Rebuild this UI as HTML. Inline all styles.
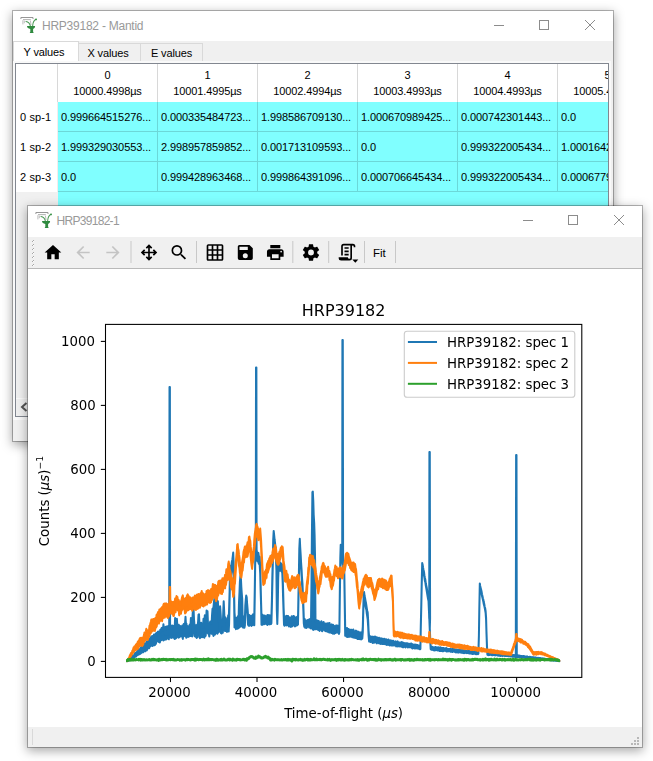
<!DOCTYPE html>
<html><head><meta charset="utf-8"><title>HRP39182 - Mantid</title>
<style>
html,body{margin:0;padding:0;}
body{width:653px;height:761px;background:#fff;position:relative;overflow:hidden;font-family:"Liberation Sans",sans-serif;font-size:12px;color:#000;}
.abs{position:absolute;}
.win{position:absolute;background:#fff;border:1px solid rgba(0,0,0,.27);background-clip:padding-box;box-sizing:border-box;}
#w1{left:12px;top:10px;width:602px;height:432px;box-shadow:0 3px 10px rgba(0,0,0,.34);}
#w2{left:27px;top:205px;width:616px;height:543px;box-shadow:0 3px 10px rgba(0,0,0,.34);}
.ttl{position:absolute;left:29px;top:0;height:30px;line-height:30px;color:#999;font-size:12px;white-space:nowrap;}
.tab{position:absolute;box-sizing:border-box;border:1px solid #d9d9d9;background:#f0f0f0;text-align:center;font-size:11px;letter-spacing:-0.14px;white-space:nowrap;}
.cell{position:absolute;height:30px;line-height:30px;font-size:11px;letter-spacing:-0.1px;white-space:nowrap;overflow:hidden;}
.hd{position:absolute;text-align:center;font-size:11px;letter-spacing:-0.12px;line-height:16px;white-space:nowrap;overflow:hidden;}
.rh{position:absolute;font-size:11px;letter-spacing:0.12px;line-height:30px;white-space:nowrap;}
svg text{font-family:"DejaVu Sans",sans-serif;}
</style></head><body>

<div class="win" id="w1">
<div class="ttl" style="letter-spacing:-0.24px">HRP39182 - Mantid</div>
<div class="abs" style="left:0;top:30px;width:600px;height:400px;background:#f0f0f0;"></div>
<div class="tab" style="left:65px;top:32px;width:63px;height:20px;line-height:18px;text-indent:-3px;">X values</div>
<div class="tab" style="left:127px;top:32px;width:63px;height:20px;line-height:18px;text-indent:0px">E values</div>
<div class="tab" style="left:0;top:30px;width:66px;height:23px;line-height:20px;background:#fff;border-bottom:none;text-indent:-4px;">Y values</div>
<div class="abs" style="left:2px;top:52px;width:594px;height:354px;background:#fff;border:1px solid #828790;box-sizing:border-box;overflow:hidden;box-shadow:0 0 0 2px #f9f9f9;">
<div class="abs" style="left:42px;top:38px;width:560px;height:120px;background:#80ffff;"></div>
<div class="abs" style="left:141px;top:0;width:1px;height:38px;background:#d8d8d8;"></div>
<div class="abs" style="left:141px;top:38px;width:1px;height:90px;background:#6cd8d8;"></div>
<div class="abs" style="left:241px;top:0;width:1px;height:38px;background:#d8d8d8;"></div>
<div class="abs" style="left:241px;top:38px;width:1px;height:90px;background:#6cd8d8;"></div>
<div class="abs" style="left:341px;top:0;width:1px;height:38px;background:#d8d8d8;"></div>
<div class="abs" style="left:341px;top:38px;width:1px;height:90px;background:#6cd8d8;"></div>
<div class="abs" style="left:441px;top:0;width:1px;height:38px;background:#d8d8d8;"></div>
<div class="abs" style="left:441px;top:38px;width:1px;height:90px;background:#6cd8d8;"></div>
<div class="abs" style="left:541px;top:0;width:1px;height:38px;background:#d8d8d8;"></div>
<div class="abs" style="left:541px;top:38px;width:1px;height:90px;background:#6cd8d8;"></div>
<div class="abs" style="left:641px;top:0;width:1px;height:38px;background:#d8d8d8;"></div>
<div class="abs" style="left:641px;top:38px;width:1px;height:90px;background:#6cd8d8;"></div>
<div class="abs" style="left:41px;top:0;width:1px;height:38px;background:#d8d8d8;"></div>
<div class="abs" style="left:41px;top:38px;width:1px;height:90px;background:#f4ecec;"></div>
<div class="abs" style="left:0;top:128px;width:42px;height:210px;background:#f0f0f0;"></div>
<div class="abs" style="left:42px;top:67px;width:560px;height:1px;background:#6cd8d8;"></div>
<div class="rh" style="left:4px;top:38px;">0 sp-1</div>
<div class="cell" style="left:45px;top:38px;width:96px;">0.999664515276...</div>
<div class="cell" style="left:145px;top:38px;width:96px;">0.000335484723...</div>
<div class="cell" style="left:245px;top:38px;width:96px;">1.998586709130...</div>
<div class="cell" style="left:345px;top:38px;width:96px;">1.000670989425...</div>
<div class="cell" style="left:445px;top:38px;width:96px;">0.000742301443...</div>
<div class="cell" style="left:545px;top:38px;width:96px;">0.0</div>
<div class="abs" style="left:42px;top:97px;width:560px;height:1px;background:#6cd8d8;"></div>
<div class="rh" style="left:4px;top:68px;">1 sp-2</div>
<div class="cell" style="left:45px;top:68px;width:96px;">1.999329030553...</div>
<div class="cell" style="left:145px;top:68px;width:96px;">2.998957859852...</div>
<div class="cell" style="left:245px;top:68px;width:96px;">0.001713109593...</div>
<div class="cell" style="left:345px;top:68px;width:96px;">0.0</div>
<div class="cell" style="left:445px;top:68px;width:96px;">0.999322005434...</div>
<div class="cell" style="left:545px;top:68px;width:96px;">1.000164298</div>
<div class="abs" style="left:42px;top:127px;width:560px;height:1px;background:#6cd8d8;"></div>
<div class="rh" style="left:4px;top:98px;">2 sp-3</div>
<div class="cell" style="left:45px;top:98px;width:96px;">0.0</div>
<div class="cell" style="left:145px;top:98px;width:96px;">0.999428963468...</div>
<div class="cell" style="left:245px;top:98px;width:96px;">0.999864391096...</div>
<div class="cell" style="left:345px;top:98px;width:96px;">0.000706645434...</div>
<div class="cell" style="left:445px;top:98px;width:96px;">0.999322005434...</div>
<div class="cell" style="left:545px;top:98px;width:96px;">0.000677994</div>
<div class="hd" style="left:42px;top:3px;width:99px;">0<br>10000.4998µs</div>
<div class="hd" style="left:142px;top:3px;width:99px;">1<br>10001.4995µs</div>
<div class="hd" style="left:242px;top:3px;width:99px;">2<br>10002.4994µs</div>
<div class="hd" style="left:342px;top:3px;width:99px;">3<br>10003.4993µs</div>
<div class="hd" style="left:442px;top:3px;width:99px;">4<br>10004.4993µs</div>
<div class="hd" style="left:542px;top:3px;width:99px;">5<br>10005.4992µs</div>
<div class="abs" style="left:0;top:334px;width:593px;height:18px;background:#f0f0f0;border-top:1px solid #fafafa;box-sizing:border-box;"></div>
<svg class="abs" style="left:2.5px;top:337px" width="10" height="12" viewBox="0 0 10 12"><path d="M7.5 2L3 6L7.5 10" stroke="#555" stroke-width="2" fill="none"/></svg>
</div>
<div class="abs" style="left:0;top:408px;width:600px;height:1px;background:#fafafa;"></div>
</div>
<div class="win" id="w2">
<div class="ttl" style="letter-spacing:-0.7px;left:28.5px">HRP39182-1</div>
<div class="abs" style="left:0;top:31px;width:614px;height:32px;background:#f0f0f0;border-bottom:1px solid #b9b9b9;box-sizing:border-box;"></div>
<div class="abs" style="left:0;top:521px;width:614px;height:20px;background:#f0f0f0;"></div>
<div class="abs" style="left:4px;top:523px;width:1px;height:16px;background:#d9d9d9;"></div>
<div class="abs" style="left:345px;top:39px;font-size:11.5px;line-height:16px;">Fit</div>
</div>
<svg class="abs" style="left:0;top:0;will-change:transform" width="653" height="761" viewBox="0 0 653 761">
<g transform="translate(0 0)">
<path d="M20.9 19V17.5H33V19" stroke="#8a8a8a" stroke-width="0.9" fill="none"/>
<path d="M23 19.6H30.8" stroke="#aaa" stroke-width="0.9" fill="none"/>
<path d="M22.9 20.2V24.4M24.3 20.6V23.2M30.4 20.6L31 25" stroke="#b5b5b5" stroke-width="0.9" fill="none"/>
<path d="M26 21.5C28 21.7 29.7 23 30.4 26.2M36.2 19.3C34 20.2 32.8 22.6 32.6 26.2" stroke="#4a9a55" stroke-width="1.05" fill="none" stroke-linecap="round"/>
<circle cx="36" cy="19.4" r="0.9" fill="#3a9447"/>
<path d="M27 26.1H35.1C35.1 27.8 34 28.8 33.1 29V31.8L33.7 32.9H29.7L30.3 31.8V29C28.5 28.8 27 27.8 27 26.1Z" fill="#2f8a3f"/>
</g>
<g transform="translate(15 195)">
<path d="M20.9 19V17.5H33V19" stroke="#8a8a8a" stroke-width="0.9" fill="none"/>
<path d="M23 19.6H30.8" stroke="#aaa" stroke-width="0.9" fill="none"/>
<path d="M22.9 20.2V24.4M24.3 20.6V23.2M30.4 20.6L31 25" stroke="#b5b5b5" stroke-width="0.9" fill="none"/>
<path d="M26 21.5C28 21.7 29.7 23 30.4 26.2M36.2 19.3C34 20.2 32.8 22.6 32.6 26.2" stroke="#4a9a55" stroke-width="1.05" fill="none" stroke-linecap="round"/>
<circle cx="36" cy="19.4" r="0.9" fill="#3a9447"/>
<path d="M27 26.1H35.1C35.1 27.8 34 28.8 33.1 29V31.8L33.7 32.9H29.7L30.3 31.8V29C28.5 28.8 27 27.8 27 26.1Z" fill="#2f8a3f"/>
</g>
<path d="M494 25.5H504" stroke="#8c8c8c" stroke-width="1" fill="none"/><rect x="539.5" y="20.5" width="9" height="9" stroke="#8c8c8c" stroke-width="1" fill="none"/><path d="M585 20L595 30M595 20L585 30" stroke="#8c8c8c" stroke-width="1" fill="none"/>
<path d="M523 220.5H533" stroke="#8c8c8c" stroke-width="1" fill="none"/><rect x="568.5" y="215.5" width="9" height="9" stroke="#8c8c8c" stroke-width="1" fill="none"/><path d="M614 215L624 225M624 215L614 225" stroke="#8c8c8c" stroke-width="1" fill="none"/>
<rect x="33" y="240" width="1" height="1" fill="#a8a8a8"/><rect x="32" y="241" width="1" height="1" fill="#a8a8a8"/><rect x="33" y="241" width="1" height="1" fill="#fff"/>
<rect x="33" y="244" width="1" height="1" fill="#a8a8a8"/><rect x="32" y="245" width="1" height="1" fill="#a8a8a8"/><rect x="33" y="245" width="1" height="1" fill="#fff"/>
<rect x="33" y="248" width="1" height="1" fill="#a8a8a8"/><rect x="32" y="249" width="1" height="1" fill="#a8a8a8"/><rect x="33" y="249" width="1" height="1" fill="#fff"/>
<rect x="33" y="252" width="1" height="1" fill="#a8a8a8"/><rect x="32" y="253" width="1" height="1" fill="#a8a8a8"/><rect x="33" y="253" width="1" height="1" fill="#fff"/>
<rect x="33" y="256" width="1" height="1" fill="#a8a8a8"/><rect x="32" y="257" width="1" height="1" fill="#a8a8a8"/><rect x="33" y="257" width="1" height="1" fill="#fff"/>
<rect x="33" y="260" width="1" height="1" fill="#a8a8a8"/><rect x="32" y="261" width="1" height="1" fill="#a8a8a8"/><rect x="33" y="261" width="1" height="1" fill="#fff"/>
<rect x="33" y="264" width="1" height="1" fill="#a8a8a8"/><rect x="32" y="265" width="1" height="1" fill="#a8a8a8"/><rect x="33" y="265" width="1" height="1" fill="#fff"/>
<g transform="translate(43.00 242.50) scale(0.8333)" fill="#000"><path d="M10,20V14H14V20H19V12H22L12,3L2,12H5V20H10Z"/></g>
<g transform="translate(73.00 242.50) scale(0.8333)" fill="#c4c4c4"><path d="M20,11V13H8L13.5,18.5L12.08,19.92L4.16,12L12.08,4.08L13.5,5.5L8,11H20Z"/></g>
<g transform="translate(103.00 242.50) scale(0.8333)" fill="#c4c4c4"><path d="M4,11V13H16L10.5,18.5L11.92,19.92L19.84,12L11.92,4.08L10.5,5.5L16,11H4Z"/></g>
<g transform="translate(139.00 242.50) scale(0.8333)" fill="#000"><path d="M13,11H18L16.5,9.5L17.92,8.08L21.84,12L17.92,15.92L16.5,14.5L18,13H13V18L14.5,16.5L15.92,17.92L12,21.84L8.08,17.92L9.5,16.5L11,18V13H6L7.5,14.5L6.08,15.92L2.16,12L6.08,8.08L7.5,9.5L6,11H11V6L9.5,7.5L8.08,6.08L12,2.16L15.92,6.08L14.5,7.5L13,6V11Z"/></g>
<g transform="translate(169.00 242.50) scale(0.8333)" fill="#000"><path d="M9.5,3A6.5,6.5 0 0,1 16,9.5C16,11.11 15.41,12.59 14.44,13.73L14.71,14H15.5L20.5,19L19,20.5L14,15.5V14.71L13.73,14.44C12.59,15.41 11.11,16 9.5,16A6.5,6.5 0 0,1 3,9.5A6.5,6.5 0 0,1 9.5,3M9.5,5C7,5 5,7 5,9.5C5,12 7,14 9.5,14C12,14 14,12 14,9.5C14,7 12,5 9.5,5Z"/></g>
<g transform="translate(205.00 242.50) scale(0.8333)" fill="#000"><path d="M10,4V8H14V4H10M16,4V8H20V4H16M16,10V14H20V10H16M16,16V20H20V16H16M14,20V16H10V20H14M8,20V16H4V20H8M8,14V10H4V14H8M8,8V4H4V8H8M10,14H14V10H10V14M4,2H20A2,2 0 0,1 22,4V20A2,2 0 0,1 20,22H4C2.92,22 2,21.1 2,20V4A2,2 0 0,1 4,2Z"/></g>
<g transform="translate(235.30 242.50) scale(0.8333)" fill="#000"><path d="M15,9H5V5H15M12,19A3,3 0 0,1 9,16A3,3 0 0,1 12,13A3,3 0 0,1 15,16A3,3 0 0,1 12,19M17,3H5C3.89,3 3,3.9 3,5V19A2,2 0 0,0 5,21H19A2,2 0 0,0 21,19V7L17,3Z"/></g>
<g transform="translate(265.30 242.50) scale(0.8333)" fill="#000"><path d="M18,3H6V7H18M19,12A1,1 0 0,1 18,11A1,1 0 0,1 19,10A1,1 0 0,1 20,11A1,1 0 0,1 19,12M16,19H8V14H16M19,8H5A3,3 0 0,0 2,11V17H6V21H18V17H22V11A3,3 0 0,0 19,8Z"/></g>
<g transform="translate(301.00 242.50) scale(0.8333)" fill="#000"><path d="M12,15.5A3.5,3.5 0 0,1 8.5,12A3.5,3.5 0 0,1 12,8.5A3.5,3.5 0 0,1 15.5,12A3.5,3.5 0 0,1 12,15.5M19.43,12.97C19.47,12.65 19.5,12.33 19.5,12C19.5,11.67 19.47,11.34 19.43,11L21.54,9.37C21.73,9.22 21.78,8.95 21.66,8.73L19.66,5.27C19.54,5.05 19.27,4.96 19.05,5.05L16.56,6.05C16.04,5.66 15.5,5.32 14.87,5.07L14.5,2.42C14.46,2.18 14.25,2 14,2H10C9.75,2 9.54,2.18 9.5,2.42L9.13,5.07C8.5,5.32 7.96,5.66 7.44,6.05L4.95,5.05C4.73,4.96 4.46,5.05 4.34,5.27L2.34,8.73C2.21,8.95 2.27,9.22 2.46,9.37L4.57,11C4.53,11.34 4.5,11.67 4.5,12C4.5,12.33 4.53,12.65 4.57,12.97L2.46,14.63C2.27,14.78 2.21,15.05 2.34,15.27L4.34,18.73C4.46,18.95 4.73,19.03 4.95,18.95L7.44,17.94C7.96,18.34 8.5,18.68 9.13,18.93L9.5,21.58C9.54,21.82 9.75,22 10,22H14C14.25,22 14.46,21.82 14.5,21.58L14.87,18.93C15.5,18.67 16.04,18.34 16.56,17.94L19.05,18.95C19.27,19.03 19.54,18.95 19.66,18.73L21.66,15.27C21.78,15.05 21.73,14.78 21.54,14.63L19.43,12.97Z"/></g>
<g transform="translate(337.00 242.20) scale(0.8333)" fill="#000"><path d="M15,20A1,1 0 0,0 16,19V4H8A1,1 0 0,0 7,5V16H5V5A3,3 0 0,1 8,2H19A3,3 0 0,1 22,5V6H20V5A1,1 0 0,0 19,4A1,1 0 0,0 18,5V9L18,19A3,3 0 0,1 15,22H5A3,3 0 0,1 2,19V18H13A2,2 0 0,0 15,20M9,6H14V8H9V6M9,10H14V12H9V10M9,14H14V16H9V14Z"/></g>
<path d="M352.3 259.6h6l-3 3.1z" fill="#000"/>
<rect x="130.5" y="241" width="1" height="22" fill="#c8c8c8"/>
<rect x="196" y="241" width="1" height="22" fill="#c8c8c8"/>
<rect x="292.3" y="241" width="1" height="22" fill="#c8c8c8"/>
<rect x="328.2" y="241" width="1" height="22" fill="#c8c8c8"/>
<rect x="364" y="241" width="1" height="22" fill="#c8c8c8"/>
<rect x="395" y="241" width="1" height="22" fill="#c8c8c8"/>
<rect x="637" y="737" width="2" height="2" fill="#b8b8b8"/>
<rect x="634" y="740" width="2" height="2" fill="#b8b8b8"/>
<rect x="637" y="740" width="2" height="2" fill="#b8b8b8"/>
<rect x="631" y="743" width="2" height="2" fill="#b8b8b8"/>
<rect x="634" y="743" width="2" height="2" fill="#b8b8b8"/>
<rect x="637" y="743" width="2" height="2" fill="#b8b8b8"/>
<clipPath id="cp"><rect x="105.5" y="324.4" width="476.29999999999995" height="353.0"/></clipPath>
<g clip-path="url(#cp)" fill="none" stroke-width="2" stroke-linejoin="round" stroke-linecap="butt">
<polygon stroke="#1f77b4" fill="#1f77b4" points="127.0,660.8 127.5,660.4 127.9,660.3 128.3,659.8 128.8,659.7 129.2,659.1 129.7,658.5 130.1,658.4 130.6,657.6 131.0,657.7 131.5,657.0 131.9,656.7 132.4,656.1 132.8,655.5 133.3,655.9 133.7,655.4 134.2,655.0 134.6,654.4 135.1,653.0 135.5,652.9 136.0,653.0 136.4,652.5 136.9,652.0 137.3,651.3 137.8,650.4 138.2,650.4 138.7,649.9 139.1,649.4 139.6,648.9 140.0,649.1 140.5,648.3 140.9,647.3 141.4,647.5 141.8,647.2 142.3,646.8 142.7,647.1 143.2,645.6 143.6,644.9 144.1,644.7 144.5,644.8 145.0,643.3 145.4,644.6 145.9,643.5 146.3,642.6 146.8,641.4 147.2,642.1 147.7,641.7 148.1,641.4 148.6,639.9 149.0,640.3 149.5,640.5 149.9,638.3 150.4,640.4 150.8,638.0 151.3,636.4 151.7,637.4 152.2,637.3 152.6,636.1 153.1,635.7 153.5,636.8 154.0,634.4 154.4,635.6 154.9,635.4 155.3,635.5 155.8,633.5 156.2,633.0 156.7,635.2 157.1,633.5 157.6,632.0 158.0,631.5 158.5,632.6 158.9,631.6 159.4,632.5 159.8,633.3 160.3,629.7 160.7,631.6 161.2,630.4 161.6,628.1 162.1,630.7 162.5,627.6 163.0,630.9 163.4,624.2 163.9,628.5 164.3,628.8 164.8,629.2 165.2,627.1 165.7,626.9 166.1,629.4 166.6,626.5 167.0,626.5 167.5,628.1 167.9,627.5 168.4,625.8 168.8,626.9 169.3,629.0 169.2,625.4 169.5,387.0 169.9,387.0 170.1,625.4 170.2,626.0 170.6,626.8 171.1,627.0 171.5,628.3 172.0,625.5 172.4,627.0 172.9,625.7 173.3,626.2 173.8,628.2 174.2,628.6 174.7,627.8 175.1,618.0 175.6,624.3 176.0,623.7 176.5,626.1 176.9,618.7 177.4,627.6 177.8,624.8 178.3,625.6 178.7,624.7 179.2,625.8 179.6,626.8 180.1,626.4 180.5,626.1 181.0,626.8 181.4,628.8 181.9,629.3 182.3,625.5 182.8,626.2 183.2,627.8 183.7,624.1 184.1,628.2 184.6,623.5 185.0,624.2 185.5,616.7 185.9,623.3 186.4,623.6 186.8,628.1 187.3,627.5 187.7,626.2 188.2,628.0 188.6,628.0 189.1,627.9 189.5,625.1 190.0,624.4 190.4,626.9 190.9,617.9 191.3,627.0 191.8,627.0 192.2,624.2 192.7,613.3 193.1,608.0 193.6,610.0 194.0,619.0 194.5,625.5 194.9,625.3 195.4,626.6 195.8,626.6 196.3,625.1 196.7,625.7 197.2,627.2 197.6,625.7 198.1,621.5 198.5,614.7 199.0,614.2 199.4,622.6 199.9,624.9 200.3,625.2 200.8,625.9 201.2,622.7 201.7,626.0 202.1,627.1 202.6,624.7 203.0,627.8 203.5,618.7 203.9,623.7 204.4,624.7 204.8,615.2 205.3,627.5 205.7,626.9 206.2,617.5 206.6,610.4 207.1,612.8 207.5,611.3 208.0,624.3 208.4,625.6 208.9,627.2 209.3,624.3 209.8,623.5 210.2,621.6 210.7,623.4 211.1,623.7 211.6,623.8 212.0,615.5 212.5,608.7 212.9,608.4 213.4,607.9 213.8,603.6 214.3,599.2 214.7,595.7 215.2,598.1 215.6,597.3 216.1,598.8 216.5,597.1 217.0,604.3 217.4,605.7 217.9,601.3 218.3,613.9 218.8,622.0 219.2,622.1 219.7,612.1 220.1,606.2 220.6,613.3 221.0,619.6 221.5,619.9 221.9,625.0 222.4,624.9 222.8,624.7 223.3,610.7 223.7,601.3 224.2,611.7 224.6,621.1 225.1,621.8 225.5,617.5 226.0,619.6 226.4,619.3 226.9,620.1 227.3,621.5 227.8,619.6 228.2,615.3 228.7,620.2 229.1,608.6 229.6,591.4 230.0,572.0 230.5,569.8 230.9,565.6 231.4,565.3 231.8,562.1 232.3,560.0 232.7,557.0 233.2,552.6 233.6,561.6 234.1,592.3 234.5,612.5 235.0,618.6 235.4,618.8 235.9,617.8 236.3,619.0 236.8,621.0 237.2,617.3 237.7,618.6 238.1,615.9 238.6,618.5 239.0,602.2 239.5,592.1 239.9,581.6 240.4,576.1 240.8,575.8 241.3,586.6 241.7,592.6 242.2,598.8 242.6,616.8 243.1,616.0 243.5,617.0 244.0,618.9 244.4,618.4 244.9,618.2 245.3,605.7 245.8,599.3 246.2,595.6 246.7,597.3 247.1,603.3 247.6,609.2 248.0,614.9 248.5,615.7 248.9,615.7 249.4,615.1 249.8,616.2 250.3,618.4 250.7,615.9 251.2,616.0 251.6,615.9 252.1,616.3 252.5,615.1 253.0,614.4 253.4,615.7 253.9,614.8 254.3,615.7 254.8,587.1 255.2,558.9 255.7,548.0 255.8,547.0 256.0,367.5 256.4,367.5 256.6,547.0 256.6,549.6 257.0,552.2 257.5,552.5 257.9,553.4 258.4,552.9 258.8,556.2 259.3,556.4 259.7,557.0 260.2,566.0 260.6,582.3 261.1,602.5 261.5,616.2 262.0,615.1 262.4,614.5 262.9,615.2 263.3,615.6 263.8,616.5 264.2,617.6 264.7,615.5 265.1,616.3 265.6,616.5 266.0,616.3 266.5,616.2 266.9,617.4 267.4,615.1 267.8,616.2 268.3,615.1 268.7,617.3 269.2,616.8 269.6,615.3 270.1,618.3 270.5,615.8 271.0,615.6 271.4,616.8 271.9,599.9 272.3,577.5 272.8,559.0 273.2,539.9 273.7,530.9 274.1,534.5 274.6,539.5 275.0,542.6 275.5,546.9 275.9,549.9 276.4,563.2 276.8,602.8 277.3,616.1 277.7,605.5 278.2,569.6 278.6,561.8 279.1,562.2 279.5,562.7 280.0,563.5 280.4,562.6 280.9,565.0 281.3,563.7 281.8,564.7 282.2,564.5 282.7,576.2 283.1,589.3 283.6,607.5 284.0,616.6 284.5,618.1 284.9,616.6 285.4,618.8 285.8,616.4 286.3,616.0 286.7,615.8 287.2,617.5 287.6,616.0 288.1,616.1 288.5,617.9 289.0,617.1 289.4,618.5 289.9,617.7 290.3,619.5 290.8,619.2 291.2,618.7 291.7,616.3 292.1,616.4 292.6,618.7 293.0,618.2 293.5,616.0 293.9,617.1 294.4,616.5 294.8,618.3 295.3,617.8 295.7,617.7 296.2,618.4 296.6,617.6 297.1,616.8 297.5,618.9 298.0,619.4 298.4,596.4 298.9,572.2 299.3,548.6 299.8,538.7 300.2,547.4 300.7,555.1 301.1,562.7 301.6,569.7 302.0,577.5 302.5,583.9 302.9,594.0 303.4,606.2 303.8,617.8 304.3,621.6 304.7,619.0 305.2,621.0 305.6,622.0 306.1,621.3 306.5,621.9 307.0,620.2 307.4,620.2 307.9,620.0 308.3,619.9 308.8,620.2 309.2,619.3 309.7,621.0 310.1,619.0 310.6,621.1 311.0,621.0 311.5,580.8 311.9,534.5 312.4,492.0 312.8,491.5 313.3,501.3 313.7,514.7 314.2,523.1 314.6,535.0 315.1,559.9 315.5,621.5 316.0,621.7 316.4,620.3 316.9,622.4 317.3,622.1 317.8,620.6 318.2,622.6 318.7,620.9 319.1,623.1 319.6,623.1 320.0,622.2 320.5,622.2 320.9,623.2 321.4,621.3 321.8,622.5 322.3,622.4 322.7,622.8 323.2,623.5 323.6,622.0 324.1,623.7 324.5,624.3 325.0,623.9 325.4,623.5 325.9,623.8 326.3,623.5 326.8,624.7 327.2,625.0 327.7,623.4 328.1,624.3 328.6,623.3 329.0,624.7 329.5,623.0 329.9,625.5 330.4,624.8 330.8,625.2 331.3,624.8 331.7,624.4 332.2,625.2 332.6,625.7 333.1,624.9 333.5,625.5 334.0,627.2 334.4,627.2 334.9,626.1 335.3,626.7 335.8,626.2 336.2,625.3 336.7,627.3 337.1,626.2 337.6,625.6 338.0,626.2 338.5,627.1 338.9,628.1 339.4,626.5 339.8,592.5 340.3,558.0 340.7,544.8 341.2,548.8 341.6,552.5 342.1,553.9 342.2,556.4 342.4,340.0 342.8,340.0 343.1,556.4 343.0,561.4 343.4,564.0 343.9,565.6 344.3,571.2 344.8,603.5 345.2,628.2 345.7,628.1 346.1,629.7 346.6,629.2 347.0,628.0 347.5,629.2 347.9,629.0 348.4,629.1 348.8,629.1 349.3,630.3 349.7,629.8 350.2,631.5 350.6,629.7 351.1,631.5 351.5,629.8 352.0,630.2 352.4,631.2 352.9,631.0 353.3,629.5 353.8,630.9 354.2,631.0 354.7,631.7 355.1,633.0 355.6,631.9 356.0,630.6 356.5,631.1 356.9,632.1 357.4,632.8 357.8,631.6 358.3,631.7 358.7,633.5 359.2,633.4 359.6,632.4 360.1,632.3 360.5,632.5 361.0,632.7 361.4,633.3 361.9,632.1 362.3,633.0 362.8,626.5 363.2,610.4 363.7,593.8 364.1,592.0 364.6,596.1 365.0,597.7 365.5,600.6 365.9,602.4 366.4,605.6 366.8,608.3 367.3,611.3 367.7,612.5 368.2,621.4 368.6,630.8 369.1,636.4 369.5,635.7 370.0,636.2 370.4,636.5 370.9,636.7 371.3,636.7 371.8,636.9 372.2,636.6 372.7,637.2 373.1,637.6 373.6,636.9 374.0,637.4 374.5,637.3 374.9,636.5 375.4,638.5 375.8,637.0 376.3,638.3 376.7,637.5 377.2,638.6 377.6,637.6 378.1,638.2 378.5,638.7 379.0,637.7 379.4,638.7 379.9,638.5 380.3,639.1 380.8,638.2 381.2,638.7 381.7,639.2 382.1,638.5 382.6,639.3 383.0,639.2 383.5,639.6 383.9,638.8 384.4,638.8 384.8,640.1 385.3,639.8 385.7,639.2 386.2,639.3 386.6,640.0 387.1,639.8 387.5,641.1 388.0,640.7 388.4,639.5 388.9,640.9 389.3,641.0 389.8,640.7 390.2,640.3 390.7,640.7 391.1,640.5 391.6,641.2 392.0,640.8 392.5,641.0 392.9,641.4 393.4,640.8 393.8,641.8 394.3,642.3 394.7,642.3 395.2,642.5 395.6,641.4 396.1,642.4 396.5,642.2 397.0,642.2 397.4,641.3 397.9,641.8 398.3,642.8 398.8,642.5 399.2,642.4 399.7,642.4 400.1,642.6 400.6,642.8 401.0,642.5 401.5,642.1 401.9,642.4 402.4,642.8 402.8,642.4 403.3,642.9 403.7,643.1 404.2,643.0 404.6,643.3 405.1,643.4 405.5,643.7 406.0,643.0 406.4,643.9 406.9,643.7 407.3,643.3 407.8,643.4 408.2,643.9 408.7,643.8 409.1,644.8 409.6,643.8 410.0,644.2 410.5,644.4 410.9,643.5 411.4,643.6 411.8,644.3 412.3,644.6 412.7,644.3 413.2,644.6 413.6,645.1 414.1,645.0 414.5,644.5 415.0,644.9 415.4,645.4 415.9,644.6 416.3,645.2 416.8,645.1 417.2,645.1 417.7,645.0 418.1,645.6 418.6,645.5 419.0,645.7 419.5,645.8 419.9,645.5 420.4,645.8 420.8,624.7 421.3,603.7 421.7,582.8 422.2,563.0 422.6,564.5 423.1,567.7 423.5,569.7 424.0,571.9 424.4,575.2 424.9,577.7 425.3,579.4 425.8,583.3 426.2,585.2 426.7,587.5 427.1,590.2 427.6,593.2 428.0,595.6 428.5,597.7 428.9,606.9 429.2,618.5 429.4,452.0 429.8,452.0 430.1,618.5 429.8,628.5 430.3,640.1 430.7,646.5 431.2,646.7 431.6,646.5 432.1,647.0 432.5,646.9 433.0,647.3 433.4,647.4 433.9,647.5 434.3,647.5 434.8,647.4 435.2,647.0 435.7,647.1 436.1,647.4 436.6,647.5 437.0,647.6 437.5,647.4 437.9,647.8 438.4,647.3 438.8,648.0 439.3,648.5 439.7,647.6 440.2,648.1 440.6,647.3 441.1,648.7 441.5,648.0 442.0,648.1 442.4,648.2 442.9,647.9 443.3,648.1 443.8,648.1 444.2,648.5 444.7,648.5 445.1,648.9 445.6,648.2 446.0,649.0 446.5,648.1 446.9,648.8 447.4,648.9 447.8,648.9 448.3,649.1 448.7,648.9 449.2,649.1 449.6,649.3 450.1,648.8 450.5,649.7 451.0,649.1 451.4,649.2 451.9,649.7 452.3,648.7 452.8,649.5 453.2,649.1 453.7,648.9 454.1,649.3 454.6,649.4 455.0,649.2 455.5,649.6 455.9,650.0 456.4,649.6 456.8,649.8 457.3,649.5 457.7,649.8 458.2,649.9 458.6,649.7 459.1,650.6 459.5,650.0 460.0,650.2 460.4,649.9 460.9,649.9 461.3,650.2 461.8,650.7 462.2,650.8 462.7,650.0 463.1,650.4 463.6,650.2 464.0,650.4 464.5,650.7 464.9,650.8 465.4,650.9 465.8,651.1 466.3,650.8 466.7,651.0 467.2,650.8 467.6,650.6 468.1,651.1 468.5,650.7 469.0,651.2 469.4,651.3 469.9,651.0 470.3,651.7 470.8,651.6 471.2,651.9 471.7,651.7 472.1,651.4 472.6,651.6 473.0,651.7 473.5,651.8 473.9,651.4 474.4,651.7 474.8,651.9 475.3,652.0 475.7,652.4 476.2,652.0 476.6,652.1 477.1,652.1 477.5,651.9 478.0,652.3 478.4,651.9 478.9,635.3 479.3,608.9 479.8,583.4 480.2,586.0 480.7,587.9 481.1,589.4 481.6,591.6 482.0,594.2 482.5,596.3 482.9,598.3 483.4,599.8 483.8,602.1 484.3,604.2 484.7,606.7 485.2,608.3 485.6,610.9 486.1,617.9 486.5,632.2 487.0,646.3 487.4,652.8 487.9,652.7 488.3,653.2 488.8,652.9 489.2,653.0 489.7,652.8 490.1,652.7 490.6,652.7 491.0,652.9 491.5,653.4 491.9,652.9 492.4,653.3 492.8,653.0 493.3,653.2 493.7,653.5 494.2,653.3 494.6,653.5 495.1,653.4 495.5,653.7 496.0,653.4 496.4,653.5 496.9,653.3 497.3,653.9 497.8,653.3 498.2,653.7 498.7,653.5 499.1,653.8 499.6,653.6 500.0,653.7 500.5,654.0 500.9,654.1 501.4,653.7 501.8,653.8 502.3,653.6 502.7,654.1 503.2,654.3 503.6,653.8 504.1,654.6 504.5,654.3 505.0,654.2 505.4,654.4 505.9,654.5 506.3,654.5 506.8,654.0 507.2,654.2 507.7,654.7 508.1,654.5 508.6,654.7 509.0,654.8 509.5,654.7 509.9,654.5 510.4,654.8 510.8,655.2 511.3,655.0 511.7,655.0 512.2,655.2 512.6,655.1 513.1,655.4 513.5,655.0 514.0,655.2 514.4,655.2 514.9,655.1 515.3,655.4 515.8,655.0 515.8,655.3 516.1,455.0 516.5,455.0 516.8,655.3 516.7,655.6 517.1,655.4 517.6,655.2 518.0,655.3 518.5,656.0 518.9,655.7 519.4,655.5 519.8,655.8 520.3,655.8 520.7,656.1 521.2,655.9 521.6,656.0 522.1,656.0 522.5,656.3 523.0,656.0 523.4,656.2 523.9,656.0 524.3,656.4 524.8,656.3 525.2,656.6 525.7,656.8 526.1,656.5 526.6,656.8 527.0,656.4 527.5,656.7 527.9,656.8 528.4,656.9 528.8,657.0 529.3,657.1 529.7,656.7 530.2,656.9 530.6,657.0 531.1,657.0 531.5,657.3 532.0,657.3 532.4,657.2 532.9,657.4 533.3,657.2 533.8,657.4 534.2,657.5 534.7,657.6 535.1,657.3 535.6,657.7 536.0,657.8 536.5,658.0 536.9,657.7 537.4,657.9 537.8,657.9 538.3,658.0 538.7,657.8 539.2,658.1 539.6,658.1 540.1,658.0 540.5,658.2 541.0,658.2 541.4,658.3 541.9,658.4 542.3,658.4 542.8,658.3 543.2,658.6 543.7,658.5 544.1,658.7 544.6,658.7 545.0,658.8 545.5,658.9 545.9,658.9 546.4,658.9 546.8,659.0 547.3,659.1 547.7,659.1 548.2,659.1 548.6,659.4 549.1,659.4 549.5,659.5 550.0,659.5 550.4,659.4 550.9,659.7 551.3,659.6 551.8,659.8 552.2,659.7 552.7,659.9 553.1,659.9 553.6,659.8 554.0,660.0 554.5,660.0 554.9,660.2 555.4,660.1 555.8,660.2 556.3,660.3 556.7,660.3 557.2,660.3 557.6,660.4 558.1,660.6 558.5,660.7 559.0,660.7 559.4,660.8 559.4,661.2 559.0,661.2 558.5,661.1 558.1,661.1 557.6,660.9 557.2,660.9 556.7,660.9 556.3,660.8 555.8,660.8 555.4,660.7 554.9,660.7 554.5,660.6 554.0,660.5 553.6,660.6 553.1,660.6 552.7,660.4 552.2,660.3 551.8,660.4 551.3,660.3 550.9,660.3 550.4,660.2 550.0,660.0 549.5,659.9 549.1,659.9 548.6,659.9 548.2,659.7 547.7,659.8 547.3,659.9 546.8,659.8 546.4,659.7 545.9,659.7 545.5,659.5 545.0,659.5 544.6,659.4 544.1,659.5 543.7,659.3 543.2,659.2 542.8,659.1 542.3,659.0 541.9,659.1 541.4,659.2 541.0,658.9 540.5,658.9 540.1,658.9 539.6,658.9 539.2,658.8 538.7,658.8 538.3,658.9 537.8,658.7 537.4,658.7 536.9,658.6 536.5,658.5 536.0,658.6 535.6,658.6 535.1,658.6 534.7,658.4 534.2,658.6 533.8,658.3 533.3,658.3 532.9,658.2 532.4,658.2 532.0,658.3 531.5,658.1 531.1,658.2 530.6,658.2 530.2,658.2 529.7,658.2 529.3,658.1 528.8,658.0 528.4,657.6 527.9,657.9 527.5,657.8 527.0,658.0 526.6,657.7 526.1,657.9 525.7,657.6 525.2,657.9 524.8,657.7 524.3,657.4 523.9,657.7 523.4,657.4 523.0,657.6 522.5,657.5 522.1,657.2 521.6,657.2 521.2,657.3 520.7,656.9 520.3,657.0 519.8,657.2 519.4,657.0 518.9,657.1 518.5,656.9 518.0,657.1 517.6,657.1 517.1,656.7 516.7,657.2 516.2,656.7 515.8,657.1 515.3,657.0 514.9,656.6 514.4,656.5 514.0,656.8 513.5,656.6 513.1,656.5 512.6,656.7 512.2,656.3 511.7,656.6 511.3,656.6 510.8,656.1 510.4,656.3 509.9,656.3 509.5,656.0 509.0,656.2 508.6,656.3 508.1,656.2 507.7,656.0 507.2,656.1 506.8,656.1 506.3,656.0 505.9,655.9 505.4,656.0 505.0,655.6 504.5,655.9 504.1,655.7 503.6,655.6 503.2,655.3 502.7,655.9 502.3,655.9 501.8,655.7 501.4,655.6 500.9,655.2 500.5,655.9 500.0,655.5 499.6,655.7 499.1,655.1 498.7,655.7 498.2,655.4 497.8,654.9 497.3,655.5 496.9,655.2 496.4,655.1 496.0,655.1 495.5,655.1 495.1,655.4 494.6,655.2 494.2,654.9 493.7,655.1 493.3,655.1 492.8,655.2 492.4,655.2 491.9,655.2 491.5,654.9 491.0,654.9 490.6,654.7 490.1,654.9 489.7,655.0 489.2,654.4 488.8,655.1 488.3,654.5 487.9,655.0 487.4,654.6 487.0,648.5 486.5,634.3 486.1,620.3 485.6,612.7 485.2,610.5 484.7,607.8 484.3,606.0 483.8,604.2 483.4,602.0 482.9,599.8 482.5,598.0 482.0,596.0 481.6,593.9 481.1,591.4 480.7,589.5 480.2,587.9 479.8,585.7 479.3,611.6 478.9,636.8 478.4,653.6 478.0,654.2 477.5,653.9 477.1,654.1 476.6,653.8 476.2,654.3 475.7,654.1 475.3,653.9 474.8,653.8 474.4,653.4 473.9,653.6 473.5,653.4 473.0,654.0 472.6,654.0 472.1,653.8 471.7,653.8 471.2,653.4 470.8,653.5 470.3,653.6 469.9,653.6 469.4,653.5 469.0,652.9 468.5,653.1 468.1,653.2 467.6,652.9 467.2,653.1 466.7,652.7 466.3,653.1 465.8,652.6 465.4,652.7 464.9,653.0 464.5,652.8 464.0,653.1 463.6,652.4 463.1,653.0 462.7,652.9 462.2,652.1 461.8,652.8 461.3,652.6 460.9,652.0 460.4,652.4 460.0,652.4 459.5,652.1 459.1,652.0 458.6,651.8 458.2,652.6 457.7,651.8 457.3,652.2 456.8,652.4 456.4,651.8 455.9,652.0 455.5,652.4 455.0,651.5 454.6,651.8 454.1,651.4 453.7,651.5 453.2,651.3 452.8,651.7 452.3,652.1 451.9,651.9 451.4,650.9 451.0,651.2 450.5,651.6 450.1,651.3 449.6,651.1 449.2,651.1 448.7,651.3 448.3,651.0 447.8,651.4 447.4,650.9 446.9,650.8 446.5,651.5 446.0,651.0 445.6,650.7 445.1,650.5 444.7,650.8 444.2,650.7 443.8,650.8 443.3,651.1 442.9,650.7 442.4,651.2 442.0,650.5 441.5,651.0 441.1,651.0 440.6,651.1 440.2,651.0 439.7,651.1 439.3,650.3 438.8,650.6 438.4,650.4 437.9,650.6 437.5,650.4 437.0,650.0 436.6,649.8 436.1,649.9 435.7,650.3 435.2,649.9 434.8,650.3 434.3,650.4 433.9,649.4 433.4,650.2 433.0,649.8 432.5,649.8 432.1,649.5 431.6,649.7 431.2,649.7 430.7,649.1 430.3,642.8 429.8,631.0 429.4,620.6 428.9,609.9 428.5,600.9 428.0,598.8 427.6,596.3 427.1,593.4 426.7,590.8 426.2,587.9 425.8,585.9 425.3,582.2 424.9,581.2 424.4,577.5 424.0,575.6 423.5,572.5 423.1,570.4 422.6,568.5 422.2,565.4 421.7,586.3 421.3,606.8 420.8,628.0 420.4,649.0 419.9,649.2 419.5,648.4 419.0,648.5 418.6,648.7 418.1,648.6 417.7,648.4 417.2,648.6 416.8,648.1 416.3,647.8 415.9,648.2 415.4,647.7 415.0,648.5 414.5,647.3 414.1,648.3 413.6,647.8 413.2,648.0 412.7,647.8 412.3,648.4 411.8,647.8 411.4,647.8 410.9,647.0 410.5,647.2 410.0,647.0 409.6,647.3 409.1,646.8 408.7,647.3 408.2,646.9 407.8,647.4 407.3,646.4 406.9,646.4 406.4,646.8 406.0,646.2 405.5,647.5 405.1,646.4 404.6,646.4 404.2,646.2 403.7,647.1 403.3,646.4 402.8,647.3 402.4,645.9 401.9,646.7 401.5,646.7 401.0,646.3 400.6,646.2 400.1,646.4 399.7,646.4 399.2,645.4 398.8,646.2 398.3,645.9 397.9,646.4 397.4,645.6 397.0,645.0 396.5,646.3 396.1,646.4 395.6,645.4 395.2,645.1 394.7,645.2 394.3,645.4 393.8,645.5 393.4,645.2 392.9,644.8 392.5,645.4 392.0,644.9 391.6,645.4 391.1,645.3 390.7,644.7 390.2,644.4 389.8,645.5 389.3,644.8 388.9,644.0 388.4,644.1 388.0,644.9 387.5,643.4 387.1,644.7 386.6,644.9 386.2,643.6 385.7,644.1 385.3,644.3 384.8,643.5 384.4,644.0 383.9,643.9 383.5,644.0 383.0,643.4 382.6,642.8 382.1,644.0 381.7,643.9 381.2,643.5 380.8,643.9 380.3,643.5 379.9,643.4 379.4,643.6 379.0,643.1 378.5,643.0 378.1,642.5 377.6,642.3 377.2,641.3 376.7,643.4 376.3,641.2 375.8,642.3 375.4,641.9 374.9,642.4 374.5,642.4 374.0,642.7 373.6,641.8 373.1,642.4 372.7,643.0 372.2,642.2 371.8,640.8 371.3,641.1 370.9,641.4 370.4,642.0 370.0,641.2 369.5,641.3 369.1,641.5 368.6,635.8 368.2,627.2 367.7,619.6 367.3,616.9 366.8,613.6 366.4,610.0 365.9,608.1 365.5,606.0 365.0,602.5 364.6,601.3 364.1,598.2 363.7,599.5 363.2,615.0 362.8,632.0 362.3,638.5 361.9,638.7 361.4,639.4 361.0,639.3 360.5,638.8 360.1,639.2 359.6,638.9 359.2,639.1 358.7,639.1 358.3,637.6 357.8,637.3 357.4,639.0 356.9,637.7 356.5,637.9 356.0,637.5 355.6,638.0 355.1,637.7 354.7,637.0 354.2,637.7 353.8,635.8 353.3,637.5 352.9,637.0 352.4,637.2 352.0,636.4 351.5,636.7 351.1,636.8 350.6,636.4 350.2,636.4 349.7,636.3 349.3,636.7 348.8,636.5 348.4,634.9 347.9,637.1 347.5,636.5 347.0,636.6 346.6,636.7 346.1,634.7 345.7,635.5 345.2,635.8 344.8,609.7 344.3,576.4 343.9,574.4 343.4,571.8 343.0,567.5 342.5,564.0 342.1,561.2 341.6,556.8 341.2,553.6 340.7,551.2 340.3,565.9 339.8,600.2 339.4,632.0 338.9,633.9 338.5,632.8 338.0,632.5 337.6,632.5 337.1,631.5 336.7,632.2 336.2,631.1 335.8,633.1 335.3,631.7 334.9,632.3 334.4,633.7 334.0,632.8 333.5,632.4 333.1,633.8 332.6,633.2 332.2,631.3 331.7,632.0 331.3,632.9 330.8,630.9 330.4,631.2 329.9,631.6 329.5,632.5 329.0,632.4 328.6,630.6 328.1,631.8 327.7,630.2 327.2,631.7 326.8,629.4 326.3,631.1 325.9,629.9 325.4,631.1 325.0,630.5 324.5,628.5 324.1,629.9 323.6,629.2 323.2,629.4 322.7,630.1 322.3,631.3 321.8,630.9 321.4,627.7 320.9,629.6 320.5,628.8 320.0,629.1 319.6,630.9 319.1,629.5 318.7,628.3 318.2,630.1 317.8,629.3 317.3,628.6 316.9,629.1 316.4,627.5 316.0,628.7 315.5,629.2 315.1,628.4 314.6,629.2 314.2,629.4 313.7,627.7 313.3,629.9 312.8,629.1 312.4,626.6 311.9,626.8 311.5,628.1 311.0,628.4 310.6,627.3 310.1,627.7 309.7,627.1 309.2,627.6 308.8,626.7 308.3,626.1 307.9,625.6 307.4,625.0 307.0,627.3 306.5,627.9 306.1,627.0 305.6,626.5 305.2,627.7 304.7,625.5 304.3,626.9 303.8,623.4 303.4,611.2 302.9,600.3 302.5,591.8 302.0,583.9 301.6,576.4 301.1,568.7 300.7,561.4 300.2,553.7 299.8,547.0 299.3,556.9 298.9,579.2 298.4,603.4 298.0,624.5 297.5,624.9 297.1,625.3 296.6,625.4 296.2,625.1 295.7,624.6 295.3,626.2 294.8,626.4 294.4,626.0 293.9,623.6 293.5,623.1 293.0,624.3 292.6,624.4 292.1,626.3 291.7,626.5 291.2,626.0 290.8,626.9 290.3,624.8 289.9,625.8 289.4,624.8 289.0,626.6 288.5,623.0 288.1,624.3 287.6,625.3 287.2,624.9 286.7,623.3 286.3,625.4 285.8,623.1 285.4,624.3 284.9,625.1 284.5,625.7 284.0,624.7 283.6,613.0 283.1,598.0 282.7,583.1 282.2,571.7 281.8,571.9 281.3,569.4 280.9,570.8 280.4,570.3 280.0,570.7 279.5,570.7 279.1,570.4 278.6,568.7 278.2,578.1 277.7,610.8 277.3,624.0 276.8,610.0 276.4,569.6 275.9,557.9 275.5,553.3 275.0,550.6 274.6,546.6 274.1,542.4 273.7,538.2 273.2,546.1 272.8,565.9 272.3,586.6 271.9,605.9 271.4,623.3 271.0,624.0 270.5,622.6 270.1,624.2 269.6,624.0 269.2,624.4 268.7,623.5 268.3,623.6 267.8,624.0 267.4,625.0 266.9,623.4 266.5,623.4 266.0,623.9 265.6,623.2 265.1,623.6 264.7,623.8 264.2,624.1 263.8,623.4 263.3,624.1 262.9,622.2 262.4,623.6 262.0,624.9 261.5,624.7 261.1,606.0 260.6,589.8 260.2,573.8 259.7,565.2 259.3,562.4 258.8,563.9 258.4,561.7 257.9,560.1 257.5,561.4 257.0,558.6 256.6,556.8 256.1,557.3 255.7,555.3 255.2,563.9 254.8,595.3 254.3,625.3 253.9,622.3 253.4,624.5 253.0,624.9 252.5,624.4 252.1,623.5 251.6,625.9 251.2,625.2 250.7,624.8 250.3,623.6 249.8,625.1 249.4,625.7 248.9,624.5 248.5,625.6 248.0,624.4 247.6,617.5 247.1,609.5 246.7,607.1 246.2,603.1 245.8,607.4 245.3,611.4 244.9,625.6 244.4,627.7 244.0,625.6 243.5,626.8 243.1,627.6 242.6,626.0 242.2,625.9 241.7,626.0 241.3,625.2 240.8,626.7 240.4,624.1 239.9,625.3 239.5,625.9 239.0,627.7 238.6,628.0 238.1,626.4 237.7,628.7 237.2,627.2 236.8,626.9 236.3,628.6 235.9,629.1 235.4,626.2 235.0,627.6 234.5,627.4 234.1,600.2 233.6,577.6 233.2,563.0 232.7,567.6 232.3,570.0 231.8,571.7 231.4,572.2 230.9,576.5 230.5,580.5 230.0,582.2 229.6,599.4 229.1,623.7 228.7,631.5 228.2,628.8 227.8,631.0 227.3,629.1 226.9,631.9 226.4,628.1 226.0,630.4 225.5,629.8 225.1,631.1 224.6,630.6 224.2,623.8 223.7,617.1 223.3,619.9 222.8,632.7 222.4,631.8 221.9,632.8 221.5,633.5 221.0,633.2 220.6,623.1 220.1,617.3 219.7,622.4 219.2,630.9 218.8,632.2 218.3,632.5 217.9,632.1 217.4,633.7 217.0,632.4 216.5,631.3 216.1,632.9 215.6,632.5 215.2,633.9 214.7,634.8 214.3,633.8 213.8,631.5 213.4,635.9 212.9,632.3 212.5,633.1 212.0,632.4 211.6,633.8 211.1,633.3 210.7,631.6 210.2,632.2 209.8,631.7 209.3,636.5 208.9,634.4 208.4,633.9 208.0,633.2 207.5,632.7 207.1,621.5 206.6,620.4 206.2,627.3 205.7,635.8 205.3,636.0 204.8,635.2 204.4,637.7 203.9,635.5 203.5,636.1 203.0,635.9 202.6,637.1 202.1,633.5 201.7,635.8 201.2,637.1 200.8,636.6 200.3,636.7 199.9,638.2 199.4,633.3 199.0,621.8 198.5,621.2 198.1,629.4 197.6,637.1 197.2,637.3 196.7,637.9 196.3,637.4 195.8,635.9 195.4,635.3 194.9,636.4 194.5,635.9 194.0,629.5 193.6,618.7 193.1,617.6 192.7,624.8 192.2,636.4 191.8,635.2 191.3,635.7 190.9,636.0 190.4,635.9 190.0,633.8 189.5,634.5 189.1,636.6 188.6,635.9 188.2,636.9 187.7,636.7 187.3,633.7 186.8,635.9 186.4,637.8 185.9,636.5 185.5,634.0 185.0,636.3 184.6,634.4 184.1,635.5 183.7,634.3 183.2,635.1 182.8,638.9 182.3,636.5 181.9,635.9 181.4,634.9 181.0,636.1 180.5,636.4 180.1,635.3 179.6,635.0 179.2,637.3 178.7,636.4 178.3,637.6 177.8,633.3 177.4,636.6 176.9,636.7 176.5,636.1 176.0,638.3 175.6,636.9 175.1,636.8 174.7,639.1 174.2,638.1 173.8,637.6 173.3,637.0 172.9,635.0 172.4,637.5 172.0,635.7 171.5,637.3 171.1,637.9 170.6,635.0 170.2,637.1 169.7,636.7 169.3,635.0 168.8,639.3 168.4,638.0 167.9,637.5 167.5,636.4 167.0,636.8 166.6,639.1 166.1,639.4 165.7,636.9 165.2,637.2 164.8,639.7 164.3,636.0 163.9,635.5 163.4,640.5 163.0,638.9 162.5,639.2 162.1,636.6 161.6,639.9 161.2,640.2 160.7,638.8 160.3,640.3 159.8,642.6 159.4,640.6 158.9,642.0 158.5,641.2 158.0,641.2 157.6,640.8 157.1,640.8 156.7,640.9 156.2,642.4 155.8,644.0 155.3,642.4 154.9,645.1 154.4,645.3 154.0,644.6 153.5,644.4 153.1,643.4 152.6,646.1 152.2,642.5 151.7,645.4 151.3,644.2 150.8,645.9 150.4,645.0 149.9,646.0 149.5,647.4 149.0,648.3 148.6,648.1 148.1,648.2 147.7,647.5 147.2,649.2 146.8,650.3 146.3,648.4 145.9,650.4 145.4,651.2 145.0,650.0 144.5,651.1 144.1,651.2 143.6,651.7 143.2,652.3 142.7,651.3 142.3,651.5 141.8,652.4 141.4,653.0 140.9,652.8 140.5,653.6 140.0,653.2 139.6,654.2 139.1,654.1 138.7,654.1 138.2,654.8 137.8,654.8 137.3,655.0 136.9,655.2 136.4,656.1 136.0,656.5 135.5,656.0 135.1,656.8 134.6,657.2 134.2,657.4 133.7,657.6 133.3,658.1 132.8,658.3 132.4,658.7 131.9,658.7 131.5,659.1 131.0,659.0 130.6,659.5 130.1,659.8 129.7,660.3 129.2,660.5 128.8,660.5 128.3,660.9 127.9,660.9 127.5,661.0 127.0,661.3"/>
<polygon stroke="#ff7f0e" fill="#ff7f0e" points="127.0,660.8 127.5,660.2 127.9,659.8 128.3,658.9 128.8,658.1 129.2,657.5 129.7,655.9 130.1,654.9 130.6,654.0 131.0,653.1 131.5,653.0 131.9,652.0 132.4,650.5 132.8,650.7 133.3,648.6 133.7,647.2 134.2,647.3 134.6,646.2 135.1,646.7 135.5,645.3 136.0,644.7 136.4,644.0 136.9,643.7 137.3,643.8 137.8,641.6 138.2,642.0 138.7,641.6 139.1,640.4 139.6,639.0 140.0,638.2 140.5,638.0 140.9,637.7 141.4,637.8 141.8,638.0 142.3,638.0 142.7,637.5 143.2,637.4 143.6,636.4 144.1,634.8 144.5,632.4 145.0,632.5 145.4,633.5 145.9,631.4 146.3,628.8 146.8,630.9 147.2,630.1 147.7,631.4 148.1,630.8 148.6,630.9 149.0,630.3 149.5,625.7 149.9,625.7 150.4,623.3 150.8,621.9 151.3,619.6 151.7,622.3 152.2,619.4 152.6,619.6 153.1,619.2 153.5,619.0 154.0,619.0 154.4,620.4 154.9,619.8 155.3,618.0 155.8,618.0 156.2,617.0 156.7,614.5 157.1,616.1 157.6,613.5 158.0,612.2 158.5,611.9 158.9,612.1 159.4,609.4 159.8,609.7 160.3,610.9 160.7,608.6 161.2,610.9 161.6,607.9 162.1,607.0 162.5,607.1 163.0,606.5 163.4,604.9 163.9,603.7 164.3,604.3 164.8,603.5 165.2,606.0 165.7,605.0 166.1,603.3 166.6,603.9 167.0,606.4 167.5,607.6 167.9,606.1 168.4,603.8 168.8,606.1 169.3,604.9 169.5,601.8 169.7,587.0 170.1,587.0 170.3,601.8 170.2,599.4 170.6,600.7 171.1,604.4 171.5,601.7 172.0,602.2 172.4,603.4 172.9,602.1 173.3,601.7 173.8,604.4 174.2,605.7 174.7,603.0 175.1,598.6 175.6,599.3 176.0,599.1 176.5,596.1 176.9,599.6 177.4,596.9 177.8,599.5 178.3,599.8 178.7,599.9 179.2,601.9 179.6,603.5 180.1,604.9 180.5,602.7 181.0,600.9 181.4,600.5 181.9,598.0 182.3,596.6 182.8,595.4 183.2,599.1 183.7,599.3 184.1,598.9 184.6,599.2 185.0,599.8 185.5,598.1 185.9,600.8 186.4,601.1 186.8,596.1 187.3,595.3 187.7,594.4 188.2,595.8 188.6,596.0 189.1,597.1 189.5,598.5 190.0,598.6 190.4,597.4 190.9,598.7 191.3,602.4 191.8,600.2 192.2,599.7 192.7,597.4 193.1,597.4 193.6,598.6 194.0,597.4 194.5,597.0 194.9,595.6 195.4,597.8 195.8,598.1 196.3,595.6 196.7,594.9 197.2,594.5 197.6,597.4 198.1,598.4 198.5,594.0 199.0,597.6 199.4,595.5 199.9,594.2 200.3,594.0 200.8,593.0 201.2,594.0 201.7,590.9 202.1,594.2 202.6,593.2 203.0,593.2 203.5,596.4 203.9,594.7 204.4,597.2 204.8,594.2 205.3,597.7 205.7,594.8 206.2,592.9 206.6,590.9 207.1,591.4 207.5,590.7 208.0,590.1 208.4,590.8 208.9,591.4 209.3,594.2 209.8,591.0 210.2,590.4 210.7,591.5 211.1,589.1 211.6,591.2 212.0,589.5 212.5,587.6 212.9,583.9 213.4,585.2 213.8,585.8 214.3,584.8 214.7,587.4 215.2,585.0 215.6,589.7 216.1,589.4 216.5,586.3 217.0,585.7 217.4,586.2 217.9,585.5 218.3,581.8 218.8,580.9 219.2,580.8 219.7,580.7 220.1,580.7 220.6,581.0 221.0,582.3 221.5,580.0 221.9,583.2 222.4,578.3 222.8,581.5 223.3,578.8 223.7,578.2 224.2,577.8 224.6,577.7 225.1,574.7 225.5,576.4 226.0,573.2 226.4,569.3 226.9,569.4 227.3,569.0 227.8,569.8 228.2,564.2 228.7,561.6 229.1,564.4 229.6,569.1 230.0,570.3 230.5,572.1 230.9,574.4 231.4,578.1 231.8,577.7 232.3,580.2 232.7,582.9 233.2,584.7 233.6,587.2 234.1,579.6 234.5,573.9 235.0,570.9 235.4,565.6 235.9,560.8 236.3,557.1 236.8,551.6 237.2,544.7 237.7,544.1 238.1,548.6 238.6,550.3 239.0,554.4 239.5,558.0 239.9,562.6 240.4,564.0 240.8,565.8 241.3,566.6 241.7,564.0 242.2,561.2 242.6,559.1 243.1,556.1 243.5,552.0 244.0,549.9 244.4,548.5 244.9,546.4 245.3,547.7 245.8,548.7 246.2,547.9 246.7,545.1 247.1,545.0 247.6,542.2 248.0,543.3 248.5,542.9 248.9,537.2 249.4,536.6 249.8,539.4 250.3,540.8 250.7,546.4 251.2,550.7 251.6,553.7 252.1,556.4 252.5,557.1 253.0,552.0 253.4,550.7 253.9,546.4 254.3,539.6 254.8,533.9 255.2,531.2 255.7,528.8 256.1,525.1 256.6,523.9 257.0,525.8 257.5,526.8 257.9,528.3 258.4,530.1 258.8,530.3 259.3,529.7 259.7,531.4 260.2,528.6 260.6,533.6 261.1,540.4 261.5,548.8 262.0,557.5 262.4,566.3 262.9,573.3 263.3,575.6 263.8,575.3 264.2,574.2 264.7,574.0 265.1,571.2 265.6,572.0 266.0,569.7 266.5,569.2 266.9,564.5 267.4,563.0 267.8,562.7 268.3,560.7 268.7,561.8 269.2,558.8 269.6,558.1 270.1,557.3 270.5,555.8 271.0,555.9 271.4,557.0 271.9,555.3 272.3,553.7 272.8,550.7 273.2,548.7 273.7,548.5 274.1,548.6 274.6,548.0 275.0,544.9 275.5,547.2 275.9,547.2 276.4,552.6 276.8,554.0 277.3,556.4 277.7,556.9 278.2,556.6 278.6,553.4 279.1,553.3 279.5,551.5 280.0,552.9 280.4,549.4 280.9,547.5 281.3,548.0 281.8,546.2 282.2,547.2 282.7,547.0 283.1,553.3 283.6,560.9 284.0,563.5 284.5,566.7 284.9,571.6 285.4,572.4 285.8,571.3 286.3,570.8 286.7,573.6 287.2,574.2 287.6,574.4 288.1,578.5 288.5,579.3 289.0,579.8 289.4,581.7 289.9,583.6 290.3,580.7 290.8,582.4 291.2,580.3 291.7,578.0 292.1,576.1 292.6,576.8 293.0,579.6 293.5,579.2 293.9,578.4 294.4,577.4 294.8,579.2 295.3,579.4 295.7,578.6 296.2,578.3 296.6,576.9 297.1,576.5 297.5,575.3 298.0,575.2 298.4,574.8 298.9,577.0 299.3,580.9 299.8,581.9 300.2,586.4 300.7,588.3 301.1,590.8 301.6,592.4 302.0,593.0 302.5,595.3 302.9,593.4 303.4,594.7 303.8,594.3 304.3,592.9 304.7,593.4 305.2,593.6 305.6,594.8 306.1,592.0 306.5,587.0 307.0,581.9 307.4,579.3 307.9,575.4 308.3,567.9 308.8,566.5 309.2,557.8 309.7,556.9 310.1,554.7 310.6,555.9 311.0,555.4 311.5,556.2 311.9,556.7 312.4,556.3 312.8,555.9 313.3,558.7 313.7,559.9 314.2,560.3 314.6,563.3 315.1,565.8 315.5,568.1 316.0,572.4 316.4,575.0 316.9,577.7 317.3,582.1 317.8,582.2 318.2,586.0 318.7,583.9 319.1,581.4 319.6,579.7 320.0,576.9 320.5,574.6 320.9,572.1 321.4,569.7 321.8,566.3 322.3,566.3 322.7,563.9 323.2,562.8 323.6,563.3 324.1,566.4 324.5,565.8 325.0,566.8 325.4,567.8 325.9,568.6 326.3,569.7 326.8,570.6 327.2,568.9 327.7,568.5 328.1,566.7 328.6,570.0 329.0,570.5 329.5,571.3 329.9,573.6 330.4,574.1 330.8,577.9 331.3,581.4 331.7,580.9 332.2,581.3 332.6,576.8 333.1,576.7 333.5,575.8 334.0,573.3 334.4,570.3 334.9,568.2 335.3,565.6 335.8,566.6 336.2,567.2 336.7,567.1 337.1,569.7 337.6,569.7 338.0,570.7 338.5,569.3 338.9,568.4 339.4,568.6 339.8,567.4 340.3,567.2 340.7,568.3 341.2,569.0 341.6,568.3 342.1,568.6 342.5,569.9 343.0,569.4 343.4,565.8 343.9,565.3 344.3,564.3 344.8,562.0 345.2,558.8 345.7,555.3 346.1,553.4 346.6,554.6 347.0,552.7 347.5,553.3 347.9,554.1 348.4,553.9 348.8,556.4 349.3,557.7 349.7,558.8 350.2,560.4 350.6,561.6 351.1,562.6 351.5,562.4 352.0,562.8 352.4,564.1 352.9,564.0 353.3,562.4 353.8,562.8 354.2,565.2 354.7,564.6 355.1,564.1 355.6,568.1 356.0,568.9 356.5,574.2 356.9,579.1 357.4,582.6 357.8,588.9 358.3,593.4 358.7,596.4 359.2,599.0 359.6,598.0 360.1,596.0 360.5,592.2 361.0,590.5 361.4,588.9 361.9,586.7 362.3,585.7 362.8,582.7 363.2,581.0 363.7,578.6 364.1,579.0 364.6,577.4 365.0,576.1 365.5,575.5 365.9,574.7 366.4,576.6 366.8,575.6 367.3,578.8 367.7,579.5 368.2,578.0 368.6,578.0 369.1,578.0 369.5,578.1 370.0,579.2 370.4,577.9 370.9,578.0 371.3,580.2 371.8,582.8 372.2,583.0 372.7,585.5 373.1,588.1 373.6,589.2 374.0,590.4 374.5,592.3 374.9,591.2 375.4,589.6 375.8,589.7 376.3,587.8 376.7,585.4 377.2,583.1 377.6,581.5 378.1,579.8 378.5,579.5 379.0,579.0 379.4,578.7 379.9,579.3 380.3,579.9 380.8,579.7 381.2,579.4 381.7,581.0 382.1,578.5 382.6,579.6 383.0,579.2 383.5,579.6 383.9,580.2 384.4,579.8 384.8,580.3 385.3,580.7 385.7,580.4 386.2,581.1 386.6,582.0 387.1,582.8 387.5,583.7 388.0,583.7 388.4,583.5 388.9,581.5 389.3,580.8 389.8,578.5 390.2,578.6 390.7,576.8 391.1,575.5 391.6,575.9 392.0,583.8 392.5,589.7 392.9,596.7 393.4,620.1 393.8,630.6 394.3,631.5 394.7,631.7 395.2,631.6 395.6,631.8 396.1,632.2 396.5,632.5 397.0,632.1 397.4,631.9 397.9,633.4 398.3,632.2 398.8,632.2 399.2,632.6 399.7,632.9 400.1,632.5 400.6,632.6 401.0,632.7 401.5,632.8 401.9,633.4 402.4,632.7 402.8,633.3 403.3,633.5 403.7,633.8 404.2,633.6 404.6,634.3 405.1,634.4 405.5,634.0 406.0,634.3 406.4,634.7 406.9,634.3 407.3,634.5 407.8,634.4 408.2,634.7 408.7,634.3 409.1,635.3 409.6,634.6 410.0,634.8 410.5,635.5 410.9,635.1 411.4,635.0 411.8,634.7 412.3,635.7 412.7,636.1 413.2,636.5 413.6,635.6 414.1,635.8 414.5,636.7 415.0,635.5 415.4,636.9 415.9,635.9 416.3,635.8 416.8,637.1 417.2,636.8 417.7,636.2 418.1,636.8 418.6,636.7 419.0,636.2 419.5,637.0 419.9,636.5 420.4,636.6 420.8,637.3 421.3,636.6 421.7,637.1 422.2,637.6 422.6,637.3 423.1,638.1 423.5,638.3 424.0,637.1 424.4,637.3 424.9,638.0 425.3,638.7 425.8,638.6 426.2,638.0 426.7,638.2 427.1,638.3 427.6,638.5 428.0,638.7 428.5,638.6 428.9,638.9 428.9,638.3 429.2,632.0 429.6,632.0 429.8,638.3 429.8,639.2 430.3,639.2 430.7,639.6 431.2,640.0 431.6,639.7 432.1,638.9 432.5,639.6 433.0,639.0 433.4,639.1 433.9,639.5 434.3,640.2 434.8,640.2 435.2,640.1 435.7,639.7 436.1,641.2 436.6,640.0 437.0,640.9 437.5,640.8 437.9,640.9 438.4,640.3 438.8,640.8 439.3,640.9 439.7,641.4 440.2,641.2 440.6,641.6 441.1,641.4 441.5,642.0 442.0,641.1 442.4,641.1 442.9,642.3 443.3,642.2 443.8,642.1 444.2,642.2 444.7,642.5 445.1,642.5 445.6,642.0 446.0,642.0 446.5,642.6 446.9,643.1 447.4,642.4 447.8,642.9 448.3,642.7 448.7,642.6 449.2,642.8 449.6,642.8 450.1,643.0 450.5,643.1 451.0,644.2 451.4,643.8 451.9,643.8 452.3,643.9 452.8,643.6 453.2,644.6 453.7,644.6 454.1,644.0 454.6,644.3 455.0,644.6 455.5,644.6 455.9,644.8 456.4,644.7 456.8,644.8 457.3,644.5 457.7,645.0 458.2,644.5 458.6,644.8 459.1,645.0 459.5,644.5 460.0,644.9 460.4,645.6 460.9,644.8 461.3,645.7 461.8,645.1 462.2,645.1 462.7,645.6 463.1,645.8 463.6,646.0 464.0,645.3 464.5,645.3 464.9,646.0 465.4,645.7 465.8,646.0 466.3,646.0 466.7,646.3 467.2,645.8 467.6,645.8 468.1,646.3 468.5,646.6 469.0,646.6 469.4,647.4 469.9,646.8 470.3,646.9 470.8,647.2 471.2,647.3 471.7,647.3 472.1,647.3 472.6,647.5 473.0,647.4 473.5,646.8 473.9,647.4 474.4,647.6 474.8,647.5 475.3,647.9 475.7,647.4 476.2,647.7 476.6,647.8 477.1,648.2 477.5,648.5 478.0,648.3 478.4,648.2 478.9,647.8 479.3,648.2 479.8,648.4 480.2,648.6 480.7,648.5 481.1,648.1 481.6,648.1 482.0,648.8 482.5,649.2 482.9,648.6 483.4,648.4 483.8,649.0 484.3,649.1 484.7,649.5 485.2,649.2 485.6,649.3 486.1,649.8 486.5,649.4 487.0,649.4 487.4,649.5 487.9,649.9 488.3,649.8 488.8,649.8 489.2,649.7 489.7,649.9 490.1,649.6 490.6,650.1 491.0,649.6 491.5,649.8 491.9,650.8 492.4,650.1 492.8,650.2 493.3,650.3 493.7,650.0 494.2,650.8 494.6,650.3 495.1,650.6 495.5,651.1 496.0,650.7 496.4,650.7 496.9,650.8 497.3,650.6 497.8,651.3 498.2,651.7 498.7,651.0 499.1,651.2 499.6,651.4 500.0,651.4 500.5,651.3 500.9,652.1 501.4,651.2 501.8,651.3 502.3,651.8 502.7,651.5 503.2,651.6 503.6,651.8 504.1,651.8 504.5,651.9 505.0,652.0 505.4,652.1 505.9,652.4 506.3,652.3 506.8,652.5 507.2,652.6 507.7,652.5 508.1,652.7 508.6,652.5 509.0,652.5 509.5,652.7 509.9,652.6 510.4,653.1 510.8,652.8 511.3,652.8 511.7,650.8 512.2,649.8 512.6,648.7 513.1,647.0 513.5,645.8 514.0,644.0 514.4,643.1 514.9,641.5 515.3,640.6 515.8,638.8 515.9,638.0 516.2,634.0 516.6,634.0 516.9,638.0 516.7,637.5 517.1,637.7 517.6,638.2 518.0,638.6 518.5,638.6 518.9,638.8 519.4,638.8 519.8,639.3 520.3,639.0 520.7,639.3 521.2,639.9 521.6,639.6 522.1,639.9 522.5,641.2 523.0,641.1 523.4,641.2 523.9,641.5 524.3,641.9 524.8,641.8 525.2,641.7 525.7,642.7 526.1,642.9 526.6,643.3 527.0,643.6 527.5,644.1 527.9,644.1 528.4,644.3 528.8,645.3 529.3,646.0 529.7,646.1 530.2,646.9 530.6,647.9 531.1,648.6 531.5,649.6 532.0,650.4 532.4,651.2 532.9,651.9 533.3,652.5 533.8,652.0 534.2,652.7 534.7,652.4 535.1,652.1 535.6,652.3 536.0,652.2 536.5,651.9 536.9,651.9 537.4,651.9 537.8,652.3 538.3,651.9 538.7,652.3 539.2,652.3 539.6,652.3 540.1,652.5 540.5,652.5 541.0,652.1 541.4,652.5 541.9,652.3 542.3,652.6 542.8,653.0 543.2,653.0 543.7,653.3 544.1,653.9 544.6,653.4 545.0,653.6 545.5,653.9 545.9,654.4 546.4,654.4 546.8,654.9 547.3,654.7 547.7,655.2 548.2,655.2 548.6,655.6 549.1,655.7 549.5,656.1 550.0,655.9 550.4,656.3 550.9,656.4 551.3,656.8 551.8,656.9 552.2,657.1 552.7,657.2 553.1,657.4 553.6,657.7 554.0,657.9 554.5,658.2 554.9,658.3 555.4,658.5 555.8,658.8 556.3,659.0 556.7,659.2 557.2,659.2 557.6,659.4 558.1,659.7 558.5,659.9 559.0,660.1 559.4,660.7 559.4,661.1 559.0,660.7 558.5,660.4 558.1,660.2 557.6,660.2 557.2,659.8 556.7,659.7 556.3,659.5 555.8,659.4 555.4,659.3 554.9,659.1 554.5,658.9 554.0,658.8 553.6,658.4 553.1,658.4 552.7,657.9 552.2,657.8 551.8,657.7 551.3,657.6 550.9,657.5 550.4,657.2 550.0,657.1 549.5,656.8 549.1,656.6 548.6,656.7 548.2,656.1 547.7,656.2 547.3,656.1 546.8,655.9 546.4,655.8 545.9,655.3 545.5,655.2 545.0,655.2 544.6,655.2 544.1,654.8 543.7,654.6 543.2,654.4 542.8,654.4 542.3,654.4 541.9,654.0 541.4,653.8 541.0,654.2 540.5,653.8 540.1,653.8 539.6,653.8 539.2,653.9 538.7,653.8 538.3,654.2 537.8,654.2 537.4,654.2 536.9,654.2 536.5,654.7 536.0,653.8 535.6,654.5 535.1,654.1 534.7,654.1 534.2,653.9 533.8,654.8 533.3,654.4 532.9,653.8 532.4,653.0 532.0,652.1 531.5,651.6 531.1,651.0 530.6,650.3 530.2,649.4 529.7,649.0 529.3,647.9 528.8,647.9 528.4,646.6 527.9,646.9 527.5,646.1 527.0,645.4 526.6,645.1 526.1,644.8 525.7,644.8 525.2,644.3 524.8,643.9 524.3,643.4 523.9,643.5 523.4,643.7 523.0,642.9 522.5,642.5 522.1,642.1 521.6,642.3 521.2,642.6 520.7,642.5 520.3,642.1 519.8,641.4 519.4,641.4 518.9,640.9 518.5,640.7 518.0,641.1 517.6,639.7 517.1,640.6 516.7,640.4 516.2,640.9 515.8,641.4 515.3,643.4 514.9,644.2 514.4,645.3 514.0,646.8 513.5,648.0 513.1,649.1 512.6,650.3 512.2,651.8 511.7,652.9 511.3,654.5 510.8,654.9 510.4,654.5 509.9,654.4 509.5,654.8 509.0,654.4 508.6,654.3 508.1,654.6 507.7,654.5 507.2,654.5 506.8,654.5 506.3,654.0 505.9,654.3 505.4,654.0 505.0,653.8 504.5,654.3 504.1,654.2 503.6,654.3 503.2,653.8 502.7,654.0 502.3,654.2 501.8,653.4 501.4,653.6 500.9,653.8 500.5,653.5 500.0,653.2 499.6,653.5 499.1,653.2 498.7,652.9 498.2,653.3 497.8,652.7 497.3,653.2 496.9,653.3 496.4,653.2 496.0,652.5 495.5,652.7 495.1,652.9 494.6,653.0 494.2,652.5 493.7,652.9 493.3,652.6 492.8,652.4 492.4,652.8 491.9,652.8 491.5,651.8 491.0,652.7 490.6,652.2 490.1,652.4 489.7,652.4 489.2,652.3 488.8,651.7 488.3,651.3 487.9,651.7 487.4,651.7 487.0,652.0 486.5,652.1 486.1,651.7 485.6,651.5 485.2,651.3 484.7,651.5 484.3,651.5 483.8,651.3 483.4,651.3 482.9,651.2 482.5,651.5 482.0,651.0 481.6,650.6 481.1,651.4 480.7,650.6 480.2,650.2 479.8,650.5 479.3,650.5 478.9,650.6 478.4,650.5 478.0,650.9 477.5,650.9 477.1,650.3 476.6,650.3 476.2,650.4 475.7,650.0 475.3,649.8 474.8,650.1 474.4,649.8 473.9,649.2 473.5,649.8 473.0,649.9 472.6,650.1 472.1,650.1 471.7,649.5 471.2,649.3 470.8,649.9 470.3,648.8 469.9,649.1 469.4,649.1 469.0,649.0 468.5,649.1 468.1,648.7 467.6,649.2 467.2,648.9 466.7,648.4 466.3,648.7 465.8,648.7 465.4,648.8 464.9,649.1 464.5,648.0 464.0,647.8 463.6,648.8 463.1,648.7 462.7,648.5 462.2,648.4 461.8,648.1 461.3,648.0 460.9,648.5 460.4,647.6 460.0,648.2 459.5,647.7 459.1,647.1 458.6,647.7 458.2,647.2 457.7,647.1 457.3,646.9 456.8,647.6 456.4,647.3 455.9,647.2 455.5,647.6 455.0,647.7 454.6,647.1 454.1,647.4 453.7,647.5 453.2,647.1 452.8,647.0 452.3,647.0 451.9,646.4 451.4,646.6 451.0,647.0 450.5,646.3 450.1,646.0 449.6,646.1 449.2,645.5 448.7,645.9 448.3,645.4 447.8,645.8 447.4,645.3 446.9,645.2 446.5,645.5 446.0,644.6 445.6,644.5 445.1,644.8 444.7,644.4 444.2,645.0 443.8,645.1 443.3,644.7 442.9,644.4 442.4,644.8 442.0,644.4 441.5,644.9 441.1,644.8 440.6,644.6 440.2,644.3 439.7,643.8 439.3,644.6 438.8,643.6 438.4,643.6 437.9,643.8 437.5,643.4 437.0,643.2 436.6,643.6 436.1,643.6 435.7,643.7 435.2,643.3 434.8,642.5 434.3,643.1 433.9,642.5 433.4,642.7 433.0,642.7 432.5,643.2 432.1,643.5 431.6,643.2 431.2,642.5 430.7,642.5 430.3,641.7 429.8,641.9 429.4,642.0 428.9,642.4 428.5,641.2 428.0,642.3 427.6,641.8 427.1,642.5 426.7,641.8 426.2,641.7 425.8,641.4 425.3,641.7 424.9,641.8 424.4,640.9 424.0,640.9 423.5,641.4 423.1,641.4 422.6,641.3 422.2,641.6 421.7,641.2 421.3,640.1 420.8,640.9 420.4,640.7 419.9,640.3 419.5,640.3 419.0,640.7 418.6,639.9 418.1,639.3 417.7,640.1 417.2,640.8 416.8,640.0 416.3,640.5 415.9,640.3 415.4,640.5 415.0,639.8 414.5,638.9 414.1,638.8 413.6,639.2 413.2,639.1 412.7,639.0 412.3,638.6 411.8,638.5 411.4,638.0 410.9,638.3 410.5,638.8 410.0,638.1 409.6,638.6 409.1,638.7 408.7,638.1 408.2,638.3 407.8,638.3 407.3,638.5 406.9,638.2 406.4,638.0 406.0,637.5 405.5,637.9 405.1,638.1 404.6,638.0 404.2,637.6 403.7,637.8 403.3,638.2 402.8,637.1 402.4,637.0 401.9,637.6 401.5,637.2 401.0,636.5 400.6,637.7 400.1,636.1 399.7,637.2 399.2,636.4 398.8,636.5 398.3,636.3 397.9,635.6 397.4,635.2 397.0,635.8 396.5,636.5 396.1,636.5 395.6,635.1 395.2,636.2 394.7,635.5 394.3,636.5 393.8,635.7 393.4,624.7 392.9,601.5 392.5,596.9 392.0,590.5 391.6,583.5 391.1,583.1 390.7,584.8 390.2,585.3 389.8,586.3 389.3,586.9 388.9,587.4 388.4,589.3 388.0,589.8 387.5,590.0 387.1,587.8 386.6,590.1 386.2,589.0 385.7,587.5 385.3,589.2 384.8,587.8 384.4,587.0 383.9,585.4 383.5,586.9 383.0,588.3 382.6,586.1 382.1,586.9 381.7,586.5 381.2,587.1 380.8,586.0 380.3,586.2 379.9,585.6 379.4,584.3 379.0,584.8 378.5,587.4 378.1,589.3 377.6,589.5 377.2,589.6 376.7,591.7 376.3,593.8 375.8,596.1 375.4,597.1 374.9,598.8 374.5,600.0 374.0,596.2 373.6,594.7 373.1,593.5 372.7,591.4 372.2,589.3 371.8,588.6 371.3,586.0 370.9,585.2 370.4,586.1 370.0,586.1 369.5,585.7 369.1,586.7 368.6,587.4 368.2,585.0 367.7,586.8 367.3,586.0 366.8,583.8 366.4,582.6 365.9,582.9 365.5,581.7 365.0,583.7 364.6,584.8 364.1,583.8 363.7,585.5 363.2,587.8 362.8,590.8 362.3,593.1 361.9,595.8 361.4,597.6 361.0,597.7 360.5,601.2 360.1,603.2 359.6,605.5 359.2,608.5 358.7,604.4 358.3,600.4 357.8,593.8 357.4,589.4 356.9,586.5 356.5,581.6 356.0,576.2 355.6,574.9 355.1,571.3 354.7,570.8 354.2,570.7 353.8,572.1 353.3,570.7 352.9,571.3 352.4,570.1 352.0,569.6 351.5,570.5 351.1,569.5 350.6,567.0 350.2,568.1 349.7,564.5 349.3,565.4 348.8,565.0 348.4,562.3 347.9,563.1 347.5,562.0 347.0,560.5 346.6,562.7 346.1,561.6 345.7,565.3 345.2,567.9 344.8,570.4 344.3,570.2 343.9,573.1 343.4,573.6 343.0,575.4 342.5,577.7 342.1,578.4 341.6,576.3 341.2,576.0 340.7,577.0 340.3,576.6 339.8,575.2 339.4,576.8 338.9,576.0 338.5,577.0 338.0,578.3 337.6,576.8 337.1,575.0 336.7,576.1 336.2,574.0 335.8,574.1 335.3,573.5 334.9,575.0 334.4,577.0 334.0,580.5 333.5,581.6 333.1,585.0 332.6,586.0 332.2,586.9 331.7,589.2 331.3,587.8 330.8,586.7 330.4,583.0 329.9,579.7 329.5,580.2 329.0,574.9 328.6,575.0 328.1,574.5 327.7,574.0 327.2,576.7 326.8,575.7 326.3,576.8 325.9,576.8 325.4,575.8 325.0,574.2 324.5,573.6 324.1,571.7 323.6,570.3 323.2,571.9 322.7,572.2 322.3,570.7 321.8,572.6 321.4,577.3 320.9,580.3 320.5,584.1 320.0,583.0 319.6,586.7 319.1,588.0 318.7,591.5 318.2,593.5 317.8,589.7 317.3,588.5 316.9,584.7 316.4,582.3 316.0,581.5 315.5,576.9 315.1,573.7 314.6,570.0 314.2,568.0 313.7,567.0 313.3,567.5 312.8,563.3 312.4,565.7 311.9,565.3 311.5,563.0 311.0,563.0 310.6,563.1 310.1,564.2 309.7,561.3 309.2,567.5 308.8,571.6 308.3,577.1 307.9,583.5 307.4,585.1 307.0,593.4 306.5,594.7 306.1,601.4 305.6,599.8 305.2,599.8 304.7,602.1 304.3,601.0 303.8,602.4 303.4,602.6 302.9,601.7 302.5,603.2 302.0,601.3 301.6,600.5 301.1,598.0 300.7,596.1 300.2,593.5 299.8,591.9 299.3,587.8 298.9,586.0 298.4,584.8 298.0,584.0 297.5,584.6 297.1,584.8 296.6,584.7 296.2,587.0 295.7,586.8 295.3,587.9 294.8,588.3 294.4,588.0 293.9,585.1 293.5,585.0 293.0,586.2 292.6,585.9 292.1,587.2 291.7,588.5 291.2,587.6 290.8,588.9 290.3,590.8 289.9,588.7 289.4,590.3 289.0,589.1 288.5,588.0 288.1,586.7 287.6,584.4 287.2,581.2 286.7,580.6 286.3,580.6 285.8,579.3 285.4,581.8 284.9,581.0 284.5,575.8 284.0,572.9 283.6,567.2 283.1,561.0 282.7,555.1 282.2,554.3 281.8,554.9 281.3,554.5 280.9,555.8 280.4,558.4 280.0,559.6 279.5,560.9 279.1,563.0 278.6,564.4 278.2,564.8 277.7,564.6 277.3,563.8 276.8,562.0 276.4,561.7 275.9,558.4 275.5,554.8 275.0,554.5 274.6,554.5 274.1,556.1 273.7,558.7 273.2,557.8 272.8,561.1 272.3,560.4 271.9,563.1 271.4,562.3 271.0,563.9 270.5,566.2 270.1,566.2 269.6,567.4 269.2,567.5 268.7,569.6 268.3,570.7 267.8,572.7 267.4,572.7 266.9,572.9 266.5,577.8 266.0,577.3 265.6,578.6 265.1,580.0 264.7,583.5 264.2,582.1 263.8,584.5 263.3,584.9 262.9,580.5 262.4,573.6 262.0,565.2 261.5,557.5 261.1,547.7 260.6,540.2 260.2,537.9 259.7,539.4 259.3,538.5 258.8,539.9 258.4,540.1 257.9,537.7 257.5,537.0 257.0,535.3 256.6,534.3 256.1,535.0 255.7,535.6 255.2,541.8 254.8,545.4 254.3,549.7 253.9,552.5 253.4,560.1 253.0,562.0 252.5,564.6 252.1,568.9 251.6,565.6 251.2,562.5 250.7,557.4 250.3,550.6 249.8,548.0 249.4,547.8 248.9,547.6 248.5,551.5 248.0,553.5 247.6,556.1 247.1,556.8 246.7,555.8 246.2,555.5 245.8,557.3 245.3,556.8 244.9,556.4 244.4,557.0 244.0,562.4 243.5,560.8 243.1,565.8 242.6,570.6 242.2,569.9 241.7,575.0 241.3,577.7 240.8,576.0 240.4,575.9 239.9,572.9 239.5,567.9 239.0,565.8 238.6,560.2 238.1,556.4 237.7,556.1 237.2,555.7 236.8,557.8 236.3,563.9 235.9,569.2 235.4,575.9 235.0,583.2 234.5,584.9 234.1,592.9 233.6,596.0 233.2,596.9 232.7,590.2 232.3,590.0 231.8,589.2 231.4,586.6 230.9,587.4 230.5,581.1 230.0,578.4 229.6,579.7 229.1,574.0 228.7,575.0 228.2,578.5 227.8,580.1 227.3,578.6 226.9,579.4 226.4,581.8 226.0,584.8 225.5,583.3 225.1,588.3 224.6,587.6 224.2,585.8 223.7,585.6 223.3,588.5 222.8,592.0 222.4,591.2 221.9,594.1 221.5,591.0 221.0,592.2 220.6,593.5 220.1,589.6 219.7,590.9 219.2,591.9 218.8,590.0 218.3,595.1 217.9,595.9 217.4,595.6 217.0,599.5 216.5,599.0 216.1,601.2 215.6,598.9 215.2,597.6 214.7,597.8 214.3,597.6 213.8,596.6 213.4,596.9 212.9,597.6 212.5,596.0 212.0,600.0 211.6,599.0 211.1,602.2 210.7,600.6 210.2,602.9 209.8,602.1 209.3,602.7 208.9,602.0 208.4,599.9 208.0,599.3 207.5,600.3 207.1,604.4 206.6,604.4 206.2,603.5 205.7,604.8 205.3,604.4 204.8,605.5 204.4,603.6 203.9,604.1 203.5,606.4 203.0,604.8 202.6,606.0 202.1,604.7 201.7,603.2 201.2,605.4 200.8,604.7 200.3,606.4 199.9,607.6 199.4,605.4 199.0,606.7 198.5,608.1 198.1,607.6 197.6,608.9 197.2,607.4 196.7,607.3 196.3,607.1 195.8,610.0 195.4,604.5 194.9,609.4 194.5,608.7 194.0,606.3 193.6,606.2 193.1,607.8 192.7,609.4 192.2,610.7 191.8,608.9 191.3,609.0 190.9,607.6 190.4,608.3 190.0,609.2 189.5,608.5 189.1,605.4 188.6,610.0 188.2,606.9 187.7,610.4 187.3,609.2 186.8,608.2 186.4,607.8 185.9,612.6 185.5,611.2 185.0,613.5 184.6,609.7 184.1,609.5 183.7,607.3 183.2,606.9 182.8,608.5 182.3,606.8 181.9,610.5 181.4,610.3 181.0,613.7 180.5,612.4 180.1,611.8 179.6,613.2 179.2,615.4 178.7,610.0 178.3,610.2 177.8,610.4 177.4,609.0 176.9,608.9 176.5,609.6 176.0,608.1 175.6,612.1 175.1,611.5 174.7,612.7 174.2,613.9 173.8,616.0 173.3,615.9 172.9,614.1 172.4,613.5 172.0,612.2 171.5,613.6 171.1,612.2 170.6,612.0 170.2,612.0 169.7,613.3 169.3,615.1 168.8,616.6 168.4,615.2 167.9,618.0 167.5,617.2 167.0,615.6 166.6,616.5 166.1,615.8 165.7,615.5 165.2,615.2 164.8,617.6 164.3,615.7 163.9,617.9 163.4,616.9 163.0,616.1 162.5,618.2 162.1,621.2 161.6,618.1 161.2,620.2 160.7,617.1 160.3,619.8 159.8,621.6 159.4,620.3 158.9,623.5 158.5,622.6 158.0,622.6 157.6,622.0 157.1,624.0 156.7,626.4 156.2,627.1 155.8,627.7 155.3,628.5 154.9,630.9 154.4,629.8 154.0,629.1 153.5,628.3 153.1,630.8 152.6,629.2 152.2,630.9 151.7,631.7 151.3,629.7 150.8,633.2 150.4,632.2 149.9,634.2 149.5,635.5 149.0,637.0 148.6,636.7 148.1,638.8 147.7,640.0 147.2,636.7 146.8,638.6 146.3,636.6 145.9,639.0 145.4,640.3 145.0,640.4 144.5,641.6 144.1,641.0 143.6,641.8 143.2,644.7 142.7,645.0 142.3,646.0 141.8,645.4 141.4,645.4 140.9,643.3 140.5,645.0 140.0,644.8 139.6,646.3 139.1,645.1 138.7,646.5 138.2,648.4 137.8,648.3 137.3,649.3 136.9,648.6 136.4,648.2 136.0,649.9 135.5,649.1 135.1,650.5 134.6,650.4 134.2,651.7 133.7,651.1 133.3,652.6 132.8,653.1 132.4,653.9 131.9,654.3 131.5,655.1 131.0,656.2 130.6,656.3 130.1,657.3 129.7,658.0 129.2,659.2 128.8,659.8 128.3,660.2 127.9,660.6 127.5,660.9 127.0,661.2"/>
<polyline stroke="#2ca02c" stroke-width="2.9" points="126.0,660.6 126.5,660.6 127.0,660.6 127.5,660.6 128.0,659.6 128.5,660.0 129.0,660.1 129.5,659.6 130.0,659.9 130.5,659.4 131.0,660.1 131.5,659.5 132.0,659.7 132.5,660.0 133.0,659.6 133.5,659.7 134.0,660.0 134.5,659.5 135.0,659.8 135.5,660.0 136.0,659.8 136.5,659.5 137.0,659.6 137.5,659.6 138.0,659.7 138.5,659.9 139.0,659.2 139.5,659.7 140.0,659.8 140.5,660.2 141.0,659.3 141.5,659.4 142.0,660.0 142.5,659.7 143.0,660.0 143.5,659.7 144.0,659.5 144.5,659.7 145.0,660.1 145.5,659.9 146.0,659.8 146.5,659.7 147.0,660.0 147.5,659.9 148.0,659.8 148.5,659.9 149.0,659.7 149.5,659.4 150.0,660.0 150.5,660.1 151.0,660.1 151.5,659.7 152.0,659.3 152.5,659.8 153.0,659.5 153.5,659.2 154.0,659.8 154.5,659.5 155.0,659.7 155.5,659.6 156.0,659.9 156.5,660.0 157.0,659.9 157.5,660.1 158.0,659.5 158.5,660.4 159.0,659.2 159.5,659.9 160.0,660.0 160.5,659.6 161.0,659.7 161.5,659.4 162.0,659.6 162.5,659.8 163.0,659.3 163.5,659.1 164.0,659.6 164.5,659.5 165.0,659.4 165.5,659.7 166.0,659.3 166.5,660.0 167.0,660.0 167.5,659.7 168.0,659.5 168.5,659.7 169.0,659.7 169.5,659.5 170.0,659.5 170.5,659.8 171.0,659.4 171.5,659.5 172.0,659.6 172.5,659.4 173.0,659.8 173.5,659.3 174.0,660.0 174.5,659.9 175.0,659.7 175.5,660.0 176.0,660.0 176.5,659.6 177.0,659.7 177.5,659.5 178.0,659.6 178.5,659.6 179.0,659.7 179.5,659.9 180.0,660.3 180.5,659.8 181.0,660.0 181.5,659.6 182.0,660.2 182.5,659.7 183.0,659.7 183.5,659.6 184.0,659.7 184.5,659.6 185.0,659.8 185.5,660.2 186.0,659.7 186.5,659.5 187.0,659.2 187.5,659.7 188.0,659.4 188.5,659.5 189.0,659.7 189.5,659.8 190.0,659.8 190.5,660.0 191.0,659.4 191.5,659.5 192.0,659.4 192.5,659.4 193.0,659.5 193.5,659.5 194.0,659.9 194.5,659.4 195.0,660.3 195.5,659.1 196.0,659.9 196.5,659.2 197.0,659.6 197.5,659.3 198.0,659.7 198.5,659.8 199.0,659.6 199.5,659.5 200.0,659.4 200.5,659.5 201.0,659.5 201.5,659.5 202.0,659.7 202.5,660.0 203.0,659.5 203.5,659.1 204.0,659.6 204.5,659.9 205.0,659.4 205.5,659.8 206.0,659.4 206.5,659.3 207.0,659.8 207.5,659.2 208.0,659.6 208.5,658.9 209.0,659.4 209.5,659.8 210.0,659.5 210.5,659.5 211.0,659.8 211.5,659.4 212.0,659.4 212.5,659.6 213.0,659.7 213.5,659.7 214.0,659.6 214.5,660.0 215.0,659.9 215.5,659.7 216.0,660.4 216.5,659.2 217.0,659.8 217.5,659.5 218.0,660.3 218.5,659.8 219.0,659.9 219.5,659.8 220.0,660.1 220.5,659.5 221.0,660.0 221.5,659.2 222.0,659.9 222.5,660.0 223.0,659.9 223.5,659.9 224.0,659.1 224.5,659.7 225.0,659.6 225.5,660.1 226.0,659.8 226.5,659.9 227.0,660.1 227.5,659.8 228.0,659.3 228.5,659.5 229.0,659.1 229.5,660.0 230.0,659.6 230.5,659.3 231.0,659.8 231.5,659.6 232.0,659.6 232.5,660.1 233.0,659.1 233.5,659.3 234.0,659.7 234.5,659.6 235.0,660.0 235.5,659.6 236.0,659.8 236.5,660.2 237.0,659.3 237.5,659.3 238.0,659.5 238.5,659.6 239.0,659.4 239.5,659.8 240.0,659.5 240.5,660.0 241.0,659.8 241.5,659.9 242.0,659.8 242.5,659.7 243.0,659.2 243.5,659.6 244.0,659.2 244.5,660.1 245.0,659.4 245.5,659.4 246.0,659.6 246.5,660.3 247.0,658.8 247.5,659.2 248.0,658.4 248.5,658.7 249.0,657.8 249.5,657.4 250.0,657.3 250.5,656.8 251.0,656.5 251.5,656.8 252.0,656.5 252.5,657.0 253.0,657.2 253.5,657.6 254.0,658.1 254.5,658.2 255.0,657.7 255.5,658.4 256.0,657.1 256.5,657.9 257.0,657.6 257.5,656.7 258.0,657.1 258.5,656.1 259.0,656.9 259.5,656.6 260.0,656.9 260.5,657.3 261.0,657.4 261.5,658.1 262.0,658.0 262.5,658.0 263.0,657.8 263.5,657.5 264.0,657.0 264.5,657.1 265.0,657.0 265.5,656.3 266.0,656.9 266.5,657.1 267.0,657.1 267.5,657.7 268.0,657.0 268.5,658.3 269.0,657.8 269.5,658.5 270.0,658.5 270.5,659.9 271.0,659.6 271.5,659.9 272.0,659.3 272.5,659.6 273.0,659.8 273.5,659.7 274.0,659.5 274.5,660.1 275.0,659.2 275.5,659.7 276.0,659.6 276.5,659.6 277.0,659.9 277.5,659.8 278.0,659.6 278.5,659.9 279.0,659.7 279.5,659.8 280.0,660.1 280.5,659.8 281.0,659.7 281.5,659.5 282.0,660.1 282.5,660.0 283.0,659.8 283.5,659.8 284.0,659.4 284.5,659.7 285.0,659.8 285.5,659.4 286.0,659.4 286.5,659.7 287.0,660.2 287.5,659.8 288.0,659.3 288.5,660.1 289.0,660.0 289.5,659.9 290.0,659.5 290.5,659.7 291.0,660.3 291.5,660.0 292.0,661.0 292.5,659.2 293.0,659.2 293.5,659.6 294.0,659.4 294.5,659.5 295.0,659.9 295.5,660.1 296.0,659.3 296.5,659.9 297.0,659.9 297.5,659.8 298.0,660.1 298.5,660.0 299.0,659.5 299.5,659.7 300.0,659.8 300.5,659.3 301.0,659.6 301.5,660.0 302.0,659.8 302.5,659.7 303.0,660.4 303.5,659.9 304.0,660.0 304.5,659.4 305.0,660.0 305.5,659.6 306.0,659.6 306.5,659.6 307.0,659.3 307.5,659.9 308.0,659.3 308.5,659.9 309.0,659.5 309.5,660.1 310.0,659.8 310.5,660.0 311.0,659.4 311.5,659.9 312.0,659.9 312.5,659.8 313.0,659.7 313.5,659.5 314.0,658.7 314.5,659.8 315.0,659.3 315.5,659.4 316.0,659.8 316.5,658.9 317.0,659.5 317.5,659.9 318.0,659.7 318.5,659.6 319.0,659.5 319.5,659.7 320.0,659.2 320.5,659.5 321.0,659.9 321.5,659.4 322.0,659.7 322.5,659.6 323.0,659.3 323.5,659.1 324.0,659.4 324.5,659.5 325.0,659.4 325.5,659.7 326.0,659.8 326.5,659.9 327.0,659.8 327.5,659.4 328.0,660.1 328.5,659.8 329.0,659.9 329.5,659.3 330.0,660.0 330.5,660.4 331.0,659.8 331.5,660.0 332.0,659.5 332.5,659.7 333.0,659.7 333.5,659.9 334.0,659.7 334.5,659.8 335.0,659.4 335.5,659.3 336.0,659.7 336.5,660.4 337.0,659.4 337.5,659.9 338.0,660.1 338.5,659.5 339.0,659.2 339.5,659.8 340.0,659.7 340.5,659.4 341.0,660.1 341.5,659.9 342.0,659.7 342.5,659.3 343.0,660.1 343.5,660.0 344.0,659.9 344.5,660.2 345.0,659.4 345.5,659.4 346.0,660.0 346.5,659.8 347.0,659.7 347.5,659.6 348.0,660.0 348.5,659.8 349.0,660.0 349.5,659.4 350.0,659.7 350.5,659.8 351.0,660.0 351.5,659.2 352.0,659.6 352.5,659.5 353.0,659.7 353.5,659.7 354.0,659.8 354.5,659.9 355.0,659.8 355.5,659.7 356.0,660.0 356.5,660.1 357.0,659.7 357.5,659.5 358.0,660.2 358.5,660.0 359.0,660.3 359.5,659.6 360.0,659.6 360.5,659.6 361.0,659.7 361.5,659.3 362.0,659.9 362.5,659.3 363.0,658.9 363.5,659.7 364.0,659.4 364.5,659.8 365.0,659.4 365.5,659.3 366.0,659.1 366.5,659.3 367.0,659.6 367.5,660.3 368.0,659.9 368.5,659.5 369.0,660.1 369.5,659.8 370.0,659.1 370.5,659.2 371.0,659.3 371.5,659.5 372.0,659.7 372.5,659.5 373.0,659.5 373.5,659.4 374.0,659.8 374.5,659.9 375.0,659.4 375.5,660.1 376.0,659.5 376.5,659.6 377.0,660.2 377.5,659.9 378.0,659.7 378.5,659.1 379.0,659.7 379.5,659.6 380.0,659.6 380.5,660.0 381.0,659.5 381.5,660.2 382.0,659.7 382.5,659.7 383.0,659.6 383.5,659.7 384.0,660.1 384.5,659.8 385.0,659.4 385.5,659.5 386.0,660.0 386.5,659.9 387.0,659.4 387.5,659.7 388.0,659.7 388.5,659.9 389.0,659.4 389.5,659.7 390.0,659.3 390.5,659.5 391.0,659.6 391.5,660.1 392.0,659.7 392.5,660.2 393.0,659.8 393.5,660.1 394.0,659.7 394.5,659.2 395.0,659.1 395.5,659.6 396.0,660.2 396.5,659.7 397.0,659.6 397.5,659.9 398.0,659.6 398.5,659.6 399.0,659.8 399.5,659.8 400.0,659.5 400.5,659.5 401.0,660.2 401.5,659.4 402.0,659.4 402.5,659.6 403.0,659.7 403.5,659.8 404.0,660.2 404.5,660.1 405.0,659.7 405.5,659.7 406.0,660.0 406.5,659.7 407.0,659.8 407.5,659.4 408.0,659.8 408.5,659.7 409.0,659.3 409.5,659.8 410.0,660.4 410.5,659.8 411.0,659.5 411.5,660.1 412.0,659.8 412.5,659.8 413.0,660.2 413.5,660.0 414.0,660.3 414.5,659.5 415.0,659.6 415.5,659.7 416.0,659.8 416.5,659.3 417.0,659.8 417.5,659.3 418.0,659.5 418.5,659.6 419.0,659.8 419.5,659.8 420.0,659.5 420.5,659.8 421.0,659.8 421.5,659.7 422.0,659.7 422.5,659.5 423.0,660.2 423.5,660.1 424.0,659.8 424.5,660.1 425.0,659.4 425.5,659.5 426.0,659.6 426.5,659.8 427.0,659.6 427.5,659.4 428.0,659.3 428.5,659.4 429.0,660.0 429.5,659.8 430.0,659.3 430.5,660.3 431.0,659.6 431.5,659.6 432.0,659.7 432.5,659.7 433.0,659.6 433.5,659.7 434.0,659.9 434.5,660.0 435.0,659.5 435.5,659.7 436.0,659.5 436.5,659.6 437.0,659.7 437.5,659.6 438.0,659.9 438.5,659.4 439.0,659.8 439.5,659.9 440.0,659.6 440.5,659.6 441.0,659.9 441.5,659.6 442.0,659.6 442.5,659.8 443.0,659.0 443.5,659.9 444.0,659.8 444.5,659.9 445.0,659.3 445.5,659.6 446.0,659.8 446.5,659.9 447.0,659.5 447.5,659.6 448.0,660.2 448.5,659.8 449.0,660.1 449.5,659.3 450.0,659.8 450.5,659.5 451.0,659.6 451.5,660.1 452.0,659.4 452.5,659.4 453.0,659.5 453.5,659.6 454.0,659.7 454.5,659.8 455.0,660.1 455.5,659.8 456.0,660.2 456.5,660.0 457.0,659.9 457.5,659.7 458.0,660.1 458.5,659.6 459.0,660.0 459.5,659.7 460.0,659.5 460.5,659.9 461.0,659.9 461.5,659.8 462.0,660.0 462.5,659.7 463.0,659.5 463.5,659.7 464.0,660.3 464.5,659.4 465.0,659.2 465.5,659.7 466.0,659.4 466.5,660.1 467.0,659.7 467.5,659.4 468.0,659.7 468.5,659.4 469.0,659.8 469.5,660.0 470.0,660.1 470.5,660.0 471.0,659.7 471.5,660.1 472.0,659.8 472.5,659.3 473.0,660.1 473.5,659.4 474.0,659.5 474.5,659.2 475.0,659.5 475.5,659.1 476.0,659.3 476.5,659.5 477.0,659.3 477.5,659.6 478.0,659.9 478.5,659.6 479.0,659.8 479.5,660.0 480.0,659.5 480.5,660.1 481.0,659.7 481.5,659.7 482.0,659.8 482.5,660.1 483.0,659.3 483.5,660.0 484.0,659.6 484.5,659.7 485.0,659.4 485.5,658.9 486.0,660.0 486.5,659.9 487.0,659.4 487.5,659.4 488.0,659.3 488.5,659.7 489.0,660.3 489.5,659.7 490.0,659.2 490.5,659.9 491.0,659.4 491.5,659.2 492.0,659.8 492.5,659.7 493.0,659.8 493.5,659.9 494.0,660.0 494.5,659.1 495.0,659.8 495.5,660.0 496.0,660.1 496.5,659.4 497.0,659.2 497.5,659.4 498.0,659.8 498.5,659.6 499.0,659.9 499.5,659.6 500.0,659.3 500.5,659.4 501.0,659.6 501.5,659.9 502.0,660.1 502.5,659.4 503.0,659.8 503.5,659.7 504.0,659.4 504.5,659.3 505.0,660.2 505.5,659.6 506.0,659.7 506.5,659.8 507.0,659.8 507.5,659.9 508.0,659.5 508.5,659.6 509.0,659.8 509.5,659.8 510.0,659.5 510.5,659.2 511.0,660.0 511.5,660.0 512.0,660.0 512.5,659.7 513.0,659.2 513.5,659.6 514.0,660.3 514.5,659.8 515.0,659.8 515.5,659.2 516.0,659.5 516.5,660.0 517.0,659.8 517.5,659.7 518.0,660.1 518.5,659.9 519.0,659.9 519.5,659.6 520.0,659.8 520.5,660.0 521.0,659.8 521.5,659.3 522.0,659.6 522.5,659.6 523.0,659.8 523.5,660.1 524.0,659.7 524.5,659.6 525.0,659.9 525.5,659.8 526.0,659.5 526.5,659.8 527.0,659.8 527.5,659.8 528.0,659.2 528.5,659.1 529.0,659.3 529.5,659.2 530.0,660.0 530.5,660.0 531.0,659.3 531.5,660.1 532.0,659.4 532.5,659.5 533.0,660.3 533.5,659.3 534.0,659.9 534.5,659.9 535.0,660.0 535.5,659.9 536.0,659.8 536.5,660.2 537.0,659.7 537.5,659.7 538.0,659.8 538.5,659.6 539.0,659.7 539.5,660.1 540.0,660.2 540.5,659.9 541.0,659.7 541.5,659.6 542.0,659.6 542.5,659.6 543.0,659.6 543.5,659.7 544.0,659.6 544.5,660.0 545.0,659.3 545.5,659.6 546.0,659.9 546.5,659.6 547.0,659.6 547.5,659.9 548.0,659.7 548.5,659.4 549.0,659.7 549.5,659.9 550.0,659.2 550.5,660.0 551.0,659.2 551.5,659.9 552.0,659.3 552.5,659.8 553.0,659.7 553.5,660.0 554.0,659.7 554.5,659.6 555.0,659.5 555.5,659.8 556.0,659.6 556.5,660.0 557.0,659.8 557.5,660.1 558.0,659.9 558.5,660.6 559.0,660.6 559.5,660.6 560.0,660.6"/>
</g>
<rect x="105.5" y="324.4" width="476.29999999999995" height="353.0" fill="none" stroke="#000" stroke-width="1.07"/>
<path d="M170.47 677.4v4.67" stroke="#000" stroke-width="1.07"/>
<text x="169.47" y="696.8" font-size="13.33" text-anchor="middle">20000</text>
<path d="M257.01 677.4v4.67" stroke="#000" stroke-width="1.07"/>
<text x="256.01" y="696.8" font-size="13.33" text-anchor="middle">40000</text>
<path d="M343.55 677.4v4.67" stroke="#000" stroke-width="1.07"/>
<text x="342.55" y="696.8" font-size="13.33" text-anchor="middle">60000</text>
<path d="M430.09 677.4v4.67" stroke="#000" stroke-width="1.07"/>
<text x="429.09" y="696.8" font-size="13.33" text-anchor="middle">80000</text>
<path d="M516.63 677.4v4.67" stroke="#000" stroke-width="1.07"/>
<text x="515.63" y="696.8" font-size="13.33" text-anchor="middle">100000</text>
<path d="M105.5 661.40h-4.67" stroke="#000" stroke-width="1.07"/>
<text x="95.8" y="665.90" font-size="13.33" text-anchor="end">0</text>
<path d="M105.5 597.40h-4.67" stroke="#000" stroke-width="1.07"/>
<text x="95.8" y="601.90" font-size="13.33" text-anchor="end">200</text>
<path d="M105.5 533.40h-4.67" stroke="#000" stroke-width="1.07"/>
<text x="95.8" y="537.90" font-size="13.33" text-anchor="end">400</text>
<path d="M105.5 469.40h-4.67" stroke="#000" stroke-width="1.07"/>
<text x="95.8" y="473.90" font-size="13.33" text-anchor="end">600</text>
<path d="M105.5 405.40h-4.67" stroke="#000" stroke-width="1.07"/>
<text x="95.8" y="409.90" font-size="13.33" text-anchor="end">800</text>
<path d="M105.5 341.40h-4.67" stroke="#000" stroke-width="1.07"/>
<text x="95.0" y="345.90" font-size="13.33" text-anchor="end">1000</text>
<text x="343.6" y="316" font-size="16" text-anchor="middle">HRP39182</text>
<text x="343.6" y="717.5" font-size="13.33" text-anchor="middle">Time-of-flight (<tspan font-style="oblique">µs</tspan>)</text>
<text transform="translate(48.7 501) rotate(-90)" font-size="13.33" text-anchor="middle">Counts (<tspan font-style="oblique">µs</tspan>)<tspan font-size="9.33" dy="-5.3">−1</tspan></text>
<rect x="404.3" y="331.3" width="170.5" height="66" rx="2.8" fill="#fff" fill-opacity="0.8" stroke="#ccc" stroke-width="1.1"/>
<path d="M407.9 342.0h29.1" stroke="#1f77b4" stroke-width="2"/>
<text x="447" y="346.9" font-size="13.33">HRP39182: spec 1</text>
<path d="M407.9 362.9h29.1" stroke="#ff7f0e" stroke-width="2"/>
<text x="447" y="367.8" font-size="13.33">HRP39182: spec 2</text>
<path d="M407.9 383.8h29.1" stroke="#2ca02c" stroke-width="2"/>
<text x="447" y="388.7" font-size="13.33">HRP39182: spec 3</text>
</svg>
</body></html>
